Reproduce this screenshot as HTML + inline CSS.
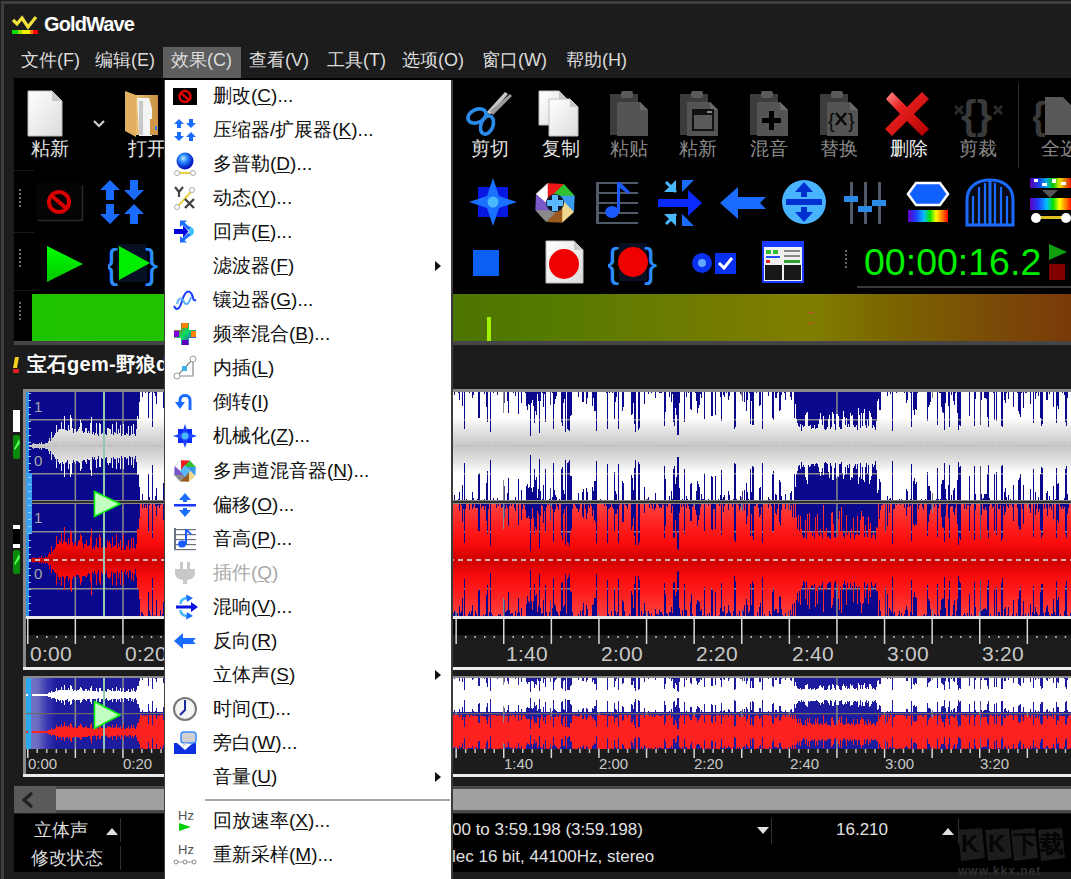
<!DOCTYPE html><html><head><meta charset="utf-8"><style>
html,body{margin:0;padding:0;}
body{width:1071px;height:879px;position:relative;overflow:hidden;background:#1c1c1c;font-family:"Liberation Sans",sans-serif;}
body>div,body>svg{position:absolute;}
.t{white-space:nowrap;line-height:1.2;}
.c{display:inline-block;width:1em;text-align:center;}
u{text-decoration:underline;text-underline-offset:2px;text-decoration-thickness:1px;}
</style></head><body>
<div style="left:0px;top:0px;width:1071px;height:879px;background:#1c1c1c;"></div>
<div style="left:1px;top:1px;width:1071px;height:3px;background:#3e3e3e;"></div>
<div style="left:1px;top:1px;width:3px;height:879px;background:#3e3e3e;"></div>
<svg style="left:11px;top:14px" width="28" height="22" viewBox="0 0 28 22">
<polyline points="2,6 6,10 11,4 17,13 25,3" fill="none" stroke="#f2e23a" stroke-width="3.2" stroke-linejoin="miter"/>
<rect x="1" y="16" width="6" height="4" fill="#00e000"/><rect x="7" y="16" width="4" height="4" fill="#9ae000"/>
<rect x="11" y="16" width="8" height="4" fill="#f0f000"/><rect x="19" y="16" width="3" height="4" fill="#ff8000"/>
<rect x="22" y="16" width="5" height="4" fill="#ff0000"/></svg>
<div class="t " style="left:44px;top:12px;font-size:20px;color:#ffffff;font-weight:bold;letter-spacing:-0.9px;">GoldWave</div>
<div style="left:163px;top:47px;width:78px;height:32px;background:#5e5e5e;"></div>
<div class="t " style="left:21px;top:50px;font-size:18px;color:#dcdcdc;"><span class="c">文</span><span class="c">件</span>(F)</div>
<div class="t " style="left:95px;top:50px;font-size:18px;color:#dcdcdc;"><span class="c">编</span><span class="c">辑</span>(E)</div>
<div class="t " style="left:171px;top:50px;font-size:18px;color:#dcdcdc;"><span class="c">效</span><span class="c">果</span>(C)</div>
<div class="t " style="left:249px;top:50px;font-size:18px;color:#dcdcdc;"><span class="c">查</span><span class="c">看</span>(V)</div>
<div class="t " style="left:327px;top:50px;font-size:18px;color:#dcdcdc;"><span class="c">工</span><span class="c">具</span>(T)</div>
<div class="t " style="left:402px;top:50px;font-size:18px;color:#dcdcdc;"><span class="c">选</span><span class="c">项</span>(O)</div>
<div class="t " style="left:482px;top:50px;font-size:18px;color:#dcdcdc;"><span class="c">窗</span><span class="c">口</span>(W)</div>
<div class="t " style="left:566px;top:50px;font-size:18px;color:#dcdcdc;"><span class="c">帮</span><span class="c">助</span>(H)</div>
<div style="left:14px;top:78px;width:1057px;height:267px;background:#000000;"></div>
<div style="left:32px;top:294px;width:1039px;height:47px;background:linear-gradient(90deg,#1fc400 0%,#22c000 25%,#4c7400 40.5%,#527a00 48%,#7a7c00 70%,#807e00 75%,#7b6400 83%,#7a4a08 93%,#7a3a08 100%)"></div>
<div style="left:487px;top:317px;width:4px;height:24px;background:#a0f000;"></div>
<div style="left:14px;top:341px;width:1057px;height:4px;background:#454545;"></div>
<div style="left:808px;top:312px;width:6px;height:1px;background:#c05030;"></div>
<div style="left:808px;top:323px;width:6px;height:1px;background:#c05030;"></div>
<div class="t " style="left:27px;top:352px;font-size:20px;color:#ffffff;font-weight:bold;letter-spacing:0.3px;"><span class="c">宝</span><span class="c">石</span>gem-<span class="c">野</span><span class="c">狼</span>d</div>
<svg style="left:12px;top:355px" width="8" height="20"><polygon points="3,2 7,2 5,13 1,13" fill="#f0d020"/><rect x="1" y="14" width="6" height="4" fill="#e02020"/></svg>
<svg style="left:19px;top:189px" width="3" height="20" viewBox="0 0 3 20"><rect x="0" y="0" width="2" height="2" fill="#6a6a6a"/><rect x="0" y="4" width="2" height="2" fill="#6a6a6a"/><rect x="0" y="8" width="2" height="2" fill="#6a6a6a"/><rect x="0" y="12" width="2" height="2" fill="#6a6a6a"/><rect x="0" y="16" width="2" height="2" fill="#6a6a6a"/></svg>
<svg style="left:19px;top:249px" width="3" height="20" viewBox="0 0 3 20"><rect x="0" y="0" width="2" height="2" fill="#6a6a6a"/><rect x="0" y="4" width="2" height="2" fill="#6a6a6a"/><rect x="0" y="8" width="2" height="2" fill="#6a6a6a"/><rect x="0" y="12" width="2" height="2" fill="#6a6a6a"/><rect x="0" y="16" width="2" height="2" fill="#6a6a6a"/></svg>
<svg style="left:19px;top:302px" width="3" height="20" viewBox="0 0 3 20"><rect x="0" y="0" width="2" height="2" fill="#6a6a6a"/><rect x="0" y="4" width="2" height="2" fill="#6a6a6a"/><rect x="0" y="8" width="2" height="2" fill="#6a6a6a"/><rect x="0" y="12" width="2" height="2" fill="#6a6a6a"/><rect x="0" y="16" width="2" height="2" fill="#6a6a6a"/></svg>
<div style="left:14px;top:170px;width:20px;height:1px;background:#1a1a1a;"></div>
<div style="left:14px;top:232px;width:20px;height:1px;background:#1a1a1a;"></div>
<div style="left:14px;top:290px;width:20px;height:1px;background:#1a1a1a;"></div>
<svg style="left:26px;top:90px" width="40" height="48" viewBox="0 0 40 48"><defs><linearGradient id="pg" x1="0" y1="0" x2="1" y2="1"><stop offset="0" stop-color="#ffffff"/><stop offset="1" stop-color="#dcdcdc"/></linearGradient></defs><path d="M2 1H26L36 11V46H2Z" fill="url(#pg)" stroke="#bdbdbd" stroke-width="1"/><path d="M26 1V11H36Z" fill="#c8c8c8"/></svg>
<div class="t " style="left:31px;top:138px;font-size:19px;color:#e4e4e4;"><span class="c">粘</span><span class="c">新</span></div>
<svg style="left:92px;top:118px" width="14" height="12" viewBox="0 0 14 12"><polyline points="2,3 7,8 12,3" fill="none" stroke="#d0d0d0" stroke-width="2.2"/></svg>
<svg style="left:122px;top:89px" width="44" height="50" viewBox="0 0 44 50"><defs><linearGradient id="fd" x1="0" y1="0" x2="1" y2="0"><stop offset="0" stop-color="#e8c070"/><stop offset="1" stop-color="#c89040"/></linearGradient></defs>
<path d="M3 2L14 6V48L3 42Z" fill="#e0b060"/><path d="M14 6H36V46H14Z" fill="url(#fd)"/>
<path d="M15 9H27L30 20V47H17Z" fill="#f4f4f4"/><path d="M17 12H21V46H17Z" fill="#c8c8c8"/>
<path d="M28 30H36V46H28Z" fill="#d09848"/><rect x="33" y="37" width="2" height="4" fill="#3a7ae0"/></svg>
<div class="t " style="left:128px;top:138px;font-size:19px;color:#e4e4e4;"><span class="c">打</span><span class="c">开</span></div>
<svg style="left:464px;top:89px" width="50" height="50" viewBox="0 0 50 50"><path d="M41 3L44 5L27 25L22 24Z" fill="#c8c8c8"/><path d="M48 7L46 5L26 22L29 26Z" fill="#9a9a9a"/>
<ellipse cx="13" cy="27" rx="9.5" ry="6.5" transform="rotate(-25 13 27)" fill="none" stroke="#2a8ce8" stroke-width="3.6"/>
<ellipse cx="23" cy="36" rx="6" ry="9.5" transform="rotate(20 23 36)" fill="none" stroke="#2a8ce8" stroke-width="3.6"/></svg>
<div class="t " style="left:471px;top:138px;font-size:19px;color:#e4e4e4;"><span class="c">剪</span><span class="c">切</span></div>
<svg style="left:536px;top:89px" width="46" height="50" viewBox="0 0 46 50"><defs><linearGradient id="pg" x1="0" y1="0" x2="1" y2="1"><stop offset="0" stop-color="#ffffff"/><stop offset="1" stop-color="#dcdcdc"/></linearGradient></defs><path d="M3 2H23L31 10V36H3Z" fill="url(#pg)" stroke="#bdbdbd" stroke-width="1"/><path d="M23 2V10H31Z" fill="#c8c8c8"/><path d="M13 10H34L42 18V47H13Z" fill="url(#pg)" stroke="#bdbdbd" stroke-width="1"/><path d="M34 10V18H42Z" fill="#c8c8c8"/></svg>
<div class="t " style="left:542px;top:138px;font-size:19px;color:#e4e4e4;"><span class="c">复</span><span class="c">制</span></div>
<svg style="left:608px;top:89px" width="42" height="50" viewBox="0 0 42 50"><path d="M2 5H30V46H2Z" fill="#3c3c3c"/><path d="M9 13H32L40 21V47H9Z" fill="#545454"/><path d="M32 13V21H40Z" fill="#6a6a6a"/><rect x="13" y="2" width="12" height="7" rx="2" fill="#5a5a5a"/></svg>
<div class="t " style="left:610px;top:138px;font-size:19px;color:#8a8a8a;"><span class="c">粘</span><span class="c">贴</span></div>
<svg style="left:678px;top:89px" width="42" height="50" viewBox="0 0 42 50"><path d="M2 5H30V46H2Z" fill="#3c3c3c"/><path d="M9 13H32L40 21V47H9Z" fill="#545454"/><path d="M32 13V21H40Z" fill="#6a6a6a"/><rect x="13" y="2" width="12" height="7" rx="2" fill="#5a5a5a"/><rect x="14" y="20" width="22" height="22" fill="#111"/><rect x="16" y="26" width="18" height="14" fill="#5a5a5a"/><rect x="29" y="22" width="5" height="2" fill="#888"/></svg>
<div class="t " style="left:679px;top:138px;font-size:19px;color:#8a8a8a;"><span class="c">粘</span><span class="c">新</span></div>
<svg style="left:748px;top:89px" width="42" height="50" viewBox="0 0 42 50"><path d="M2 5H30V46H2Z" fill="#3c3c3c"/><path d="M9 13H32L40 21V47H9Z" fill="#545454"/><path d="M32 13V21H40Z" fill="#6a6a6a"/><rect x="13" y="2" width="12" height="7" rx="2" fill="#5a5a5a"/><rect x="21" y="22" width="5" height="19" fill="#000"/><rect x="14" y="29" width="19" height="5" fill="#000"/></svg>
<div class="t " style="left:750px;top:138px;font-size:19px;color:#8a8a8a;"><span class="c">混</span><span class="c">音</span></div>
<svg style="left:818px;top:89px" width="42" height="50" viewBox="0 0 42 50"><path d="M2 5H30V46H2Z" fill="#3c3c3c"/><path d="M9 13H32L40 21V47H9Z" fill="#545454"/><path d="M32 13V21H40Z" fill="#6a6a6a"/><rect x="13" y="2" width="12" height="7" rx="2" fill="#5a5a5a"/><text x="10" y="39" font-size="20" font-family="Liberation Sans" fill="#0a0a0a">{</text><text x="30" y="39" font-size="20" font-family="Liberation Sans" fill="#0a0a0a">}</text><path d="M18 24L28 36M28 24L18 36" stroke="#0a0a0a" stroke-width="2.6"/></svg>
<div class="t " style="left:820px;top:138px;font-size:19px;color:#8a8a8a;"><span class="c">替</span><span class="c">换</span></div>
<svg style="left:882px;top:89px" width="52" height="50" viewBox="0 0 52 50"><defs><linearGradient id="rx" x1="0" y1="0" x2="1" y2="1"><stop offset="0" stop-color="#ff9090"/><stop offset="0.35" stop-color="#e82020"/><stop offset="1" stop-color="#b00000"/></linearGradient></defs>
<path d="M4 10L10 3L25 18L40 3L47 10L32 25L47 40L40 47L25 32L10 47L3 40L18 25Z" fill="url(#rx)"/></svg>
<div class="t " style="left:890px;top:138px;font-size:19px;color:#f0f0f0;"><span class="c">删</span><span class="c">除</span></div>
<svg style="left:954px;top:89px" width="52" height="50" viewBox="0 0 52 50"><text x="7" y="40" font-size="40" font-family="Liberation Sans" fill="#3a3a3a" font-weight="bold">{}</text>
<path d="M1 17L9 25M9 17L1 25M40 17L48 25M48 17L40 25" stroke="#2a2a2a" stroke-width="3"/></svg>
<div class="t " style="left:959px;top:138px;font-size:19px;color:#8a8a8a;"><span class="c">剪</span><span class="c">裁</span></div>
<div style="left:1018px;top:83px;width:1px;height:85px;background:#2c2c2c;"></div>
<svg style="left:1033px;top:89px" width="40" height="50" viewBox="0 0 40 50"><text x="-2" y="40" font-size="38" font-family="Liberation Sans" fill="#3a3a3a" font-weight="bold">{</text>
<path d="M12 8H30L38 16V46H12Z" fill="#585858"/></svg>
<div class="t " style="left:1041px;top:138px;font-size:19px;color:#8a8a8a;"><span class="c">全</span><span class="c">选</span></div>
<svg style="left:36px;top:183px" width="48" height="40" viewBox="0 0 48 40"><rect x="0" y="0" width="46" height="37" fill="#050505"/><path d="M46.5 2V37.5H2" fill="none" stroke="#2a2a2a" stroke-width="1.5"/><circle cx="23" cy="19" r="10" fill="none" stroke="#d80000" stroke-width="4"/><path d="M16 13L30 25" stroke="#d80000" stroke-width="4"/></svg>
<svg style="left:98px;top:178px" width="48" height="48" viewBox="0 0 48 48"><g fill="#1a6cff">
<path d="M12 2L22 12H16V22H8V12H2Z"/><path d="M12 46L22 36H16V26H8V36H2Z"/>
<path d="M36 22L46 12H40V2H32V12H26Z"/><path d="M36 26L46 36H40V46H32V36H26Z"/></g></svg>
<svg style="left:469px;top:178px" width="48" height="48" viewBox="0 0 48 48"><rect x="9" y="9" width="30" height="30" fill="#0818e0"/><path d="M24 0L30 18L48 24L30 30L24 48L18 30L0 24L18 18Z" fill="#1a70ff"/><circle cx="24" cy="24" r="5.5" fill="#48b8ff"/></svg>
<svg style="left:532px;top:180px" width="46" height="46" viewBox="0 0 46 46"><path d="M17.7 28.1L4.0 14.1L15.8 3.3Z" fill="#ffffff" stroke="#d0d0d0" stroke-width="0.8"/><path d="M15.7 22.8L15.8 3.3L31.9 4.0Z" fill="#ee1a1a"/><path d="M17.9 17.7L31.9 4.0L42.7 15.8Z" fill="#30c030"/><path d="M23.2 15.7L42.7 15.8L42.0 31.9Z" fill="#3a9af0"/><path d="M28.3 17.9L42.0 31.9L30.2 42.7Z" fill="#f0d890"/><path d="M30.3 23.2L30.2 42.7L14.1 42.0Z" fill="#9a5a20"/><path d="M28.1 28.3L14.1 42.0L3.3 30.2Z" fill="#8a8a8a"/><path d="M22.8 30.3L3.3 30.2L4.0 14.1Z" fill="#7a5ac8"/><circle cx="23" cy="23" r="9" fill="#101830"/><path d="M20 15H26V20H31V26H26V31H20V26H15V20H20Z" fill="#5ab8ff"/></svg>
<svg style="left:594px;top:180px" width="46" height="46" viewBox="0 0 46 46"><g fill="#505a68"><rect x="2" y="2" width="3" height="42"/><rect x="2" y="2" width="42" height="2"/><rect x="2" y="12" width="42" height="2"/><rect x="2" y="22" width="42" height="2"/><rect x="2" y="32" width="42" height="2"/><rect x="2" y="42" width="42" height="2"/></g>
<ellipse cx="18" cy="32" rx="7" ry="6" fill="#1a5aff"/><rect x="23" y="2" width="3" height="30" fill="#1a5aff"/><path d="M26 2L36 12L34 14L26 8Z" fill="#1a5aff"/></svg>
<svg style="left:656px;top:178px" width="50" height="50" viewBox="0 0 50 50"><path d="M2 21H32V12L46 25L32 38V29H2Z" fill="#0a2aff"/>
<path d="M20 2L20 14L8 14Z" fill="#48b8ff"/><path d="M10 4L20 14" stroke="#48b8ff" stroke-width="3"/>
<path d="M20 48L20 36L8 36Z" fill="#48b8ff"/><path d="M10 46L20 36" stroke="#48b8ff" stroke-width="3"/>
<path d="M26 2L38 2L26 14Z" fill="#1a6cff"/><path d="M26 48L38 48L26 36Z" fill="#1a6cff"/></svg>
<svg style="left:718px;top:185px" width="50" height="36" viewBox="0 0 50 36"><path d="M2 18L20 2V12H48L42 18L48 24H20V34Z" fill="#1a6cff"/></svg>
<svg style="left:780px;top:178px" width="48" height="48" viewBox="0 0 48 48"><circle cx="24" cy="24" r="22" fill="#48b4ff"/><rect x="6" y="21" width="36" height="6" fill="#0030d0"/>
<path d="M24 4L33 14H27V19H21V14H15Z" fill="#0030d0"/><path d="M24 44L33 34H27V29H21V34H15Z" fill="#0030d0"/></svg>
<svg style="left:842px;top:180px" width="48" height="46" viewBox="0 0 48 46"><g fill="#505a68"><rect x="8" y="2" width="3" height="42"/><rect x="22" y="2" width="3" height="42"/><rect x="36" y="2" width="3" height="42"/></g>
<g fill="#2a8ae8"><rect x="2" y="16" width="14" height="6"/><rect x="16" y="26" width="14" height="6"/><rect x="30" y="20" width="14" height="6"/></g></svg>
<svg style="left:904px;top:178px" width="48" height="48" viewBox="0 0 48 48"><defs><linearGradient id="rb" x1="0" y1="0" x2="1" y2="0"><stop offset="0" stop-color="#6000c0"/><stop offset="0.2" stop-color="#2040ff"/><stop offset="0.4" stop-color="#00c0ff"/><stop offset="0.55" stop-color="#00e000"/><stop offset="0.7" stop-color="#ffff00"/><stop offset="0.85" stop-color="#ff8000"/><stop offset="1" stop-color="#ff0000"/></linearGradient></defs>
<path d="M4 16L12 5H36L44 16L36 27H12Z" fill="#1060ff" stroke="#fff" stroke-width="2.5"/><rect x="4" y="32" width="40" height="12" fill="url(#rb)"/></svg>
<svg style="left:964px;top:178px" width="52" height="50" viewBox="0 0 52 50"><path d="M3 47V22C3 8 14 2 26 2C38 2 49 8 49 22V47Z" fill="#0a0a14" stroke="#1a6cff" stroke-width="3"/>
<g stroke="#1a6cff" stroke-width="2.2"><path d="M9 46V18M15 46V9M21 46V5M31 46V5M37 46V9M43 46V18"/></g><path d="M26 2V47" stroke="#1a6cff" stroke-width="3"/></svg>
<svg style="left:1028px;top:176px" width="43" height="52" viewBox="0 0 43 52"><rect x="2" y="2" width="42" height="10" fill="url(#rb)" opacity="0.9"/><path d="M6 3h4v3h-4zM14 7h5v3h-5zM24 3h4v4h-4zM33 6h5v3h-5z" fill="#fff"/>
<path d="M14 14L30 14L22 22Z" fill="#555"/><rect x="2" y="22" width="42" height="12" fill="url(#rb)"/>
<rect x="8" y="40" width="30" height="3" fill="#e0c020"/><circle cx="8" cy="42" r="5" fill="#fff"/><circle cx="38" cy="42" r="5" fill="#fff"/></svg>
<svg style="left:44px;top:244px" width="42" height="40" viewBox="0 0 42 40"><defs><linearGradient id="gpl" x1="0" y1="0" x2="0" y2="1"><stop offset="0" stop-color="#00ff00"/><stop offset="1" stop-color="#00c800"/></linearGradient></defs><path d="M3 2L39 20L3 38Z" fill="url(#gpl)"/></svg>
<svg style="left:108px;top:240px" width="50" height="46" viewBox="0 0 50 46"><rect x="9" y="4" width="30" height="38" fill="#061022"/><path d="M11 6L42 23L11 40Z" fill="#00ee00"/>
<text x="-3" y="38" font-size="40" font-family="Liberation Sans" fill="#2a8cff">{</text><text x="37" y="38" font-size="40" font-family="Liberation Sans" fill="#2a8cff">}</text></svg>
<svg style="left:473px;top:250px" width="26" height="26" viewBox="0 0 26 26"><rect x="0" y="0" width="26" height="26" fill="#0a60f0"/></svg>
<svg style="left:544px;top:239px" width="42" height="46" viewBox="0 0 42 46"><defs><linearGradient id="pg" x1="0" y1="0" x2="1" y2="1"><stop offset="0" stop-color="#ffffff"/><stop offset="1" stop-color="#dcdcdc"/></linearGradient></defs><path d="M2 2H30L39 11V44H2Z" fill="url(#pg)" stroke="#bdbdbd" stroke-width="1"/><path d="M30 2V11H39Z" fill="#c8c8c8"/><circle cx="20" cy="25" r="15" fill="#f00000"/></svg>
<svg style="left:608px;top:239px" width="50" height="46" viewBox="0 0 50 46"><rect x="11" y="4" width="28" height="38" fill="#061022"/><circle cx="25" cy="23" r="15" fill="#f00000"/>
<text x="-2" y="38" font-size="40" font-family="Liberation Sans" fill="#2a8cff">{</text><text x="36" y="38" font-size="40" font-family="Liberation Sans" fill="#2a8cff">}</text></svg>
<svg style="left:690px;top:252px" width="48" height="24" viewBox="0 0 48 24"><circle cx="12" cy="11" r="10" fill="#0a30f0"/><circle cx="12" cy="11" r="4" fill="#60a8ff"/><rect x="25" y="1" width="21" height="21" fill="#0a30f0"/><polyline points="29,11 34,16 42,6" fill="none" stroke="#fff" stroke-width="3"/></svg>
<svg style="left:762px;top:241px" width="44" height="44" viewBox="0 0 44 44"><rect x="1" y="1" width="40" height="40" fill="#f0f0f0" stroke="#1a3aff" stroke-width="2"/><rect x="1" y="1" width="40" height="5" fill="#1a3aff"/>
<rect x="4" y="9" width="5" height="4" fill="#30c030"/><rect x="11" y="9" width="5" height="4" fill="#30c030"/><rect x="4" y="15" width="14" height="2" fill="#2050ff"/><rect x="4" y="19" width="4" height="3" fill="#e02020"/>
<rect x="22" y="9" width="16" height="2" fill="#888"/><rect x="22" y="14" width="16" height="2" fill="#888"/><rect x="22" y="19" width="16" height="3" fill="#30a030"/>
<rect x="3" y="24" width="17" height="15" fill="#181818"/><rect x="22" y="24" width="17" height="15" fill="#181818"/></svg>
<svg style="left:845px;top:250px" width="3" height="20" viewBox="0 0 3 20"><rect x="0" y="0" width="2" height="2" fill="#6a6a6a"/><rect x="0" y="4" width="2" height="2" fill="#6a6a6a"/><rect x="0" y="8" width="2" height="2" fill="#6a6a6a"/><rect x="0" y="12" width="2" height="2" fill="#6a6a6a"/><rect x="0" y="16" width="2" height="2" fill="#6a6a6a"/></svg>
<div style="left:857px;top:286px;width:214px;height:2px;background:#3a3a3a;"></div>
<div class="t " style="left:864px;top:240px;font-size:37.5px;color:#00ee00;">00:00:16.2</div>
<svg style="left:1048px;top:243px" width="20" height="40" viewBox="0 0 20 40"><path d="M1 1L19 9L1 17Z" fill="#10a010"/><rect x="1" y="21" width="16" height="16" fill="#800000"/></svg>
<div style="left:23px;top:389px;width:1048px;height:3px;background:#8a8a8a;"></div>
<div style="left:23px;top:389px;width:3px;height:281px;background:#8a8a8a;"></div>
<div style="left:26px;top:392px;width:1045px;height:108px;background:#0a088c;"></div>
<div style="left:26px;top:504px;width:1045px;height:112px;background:#0a088c;"></div>
<div style="left:26px;top:500px;width:1045px;height:4px;background:#8a8a8a;"></div>
<div style="left:26px;top:501px;width:1045px;height:2px;background:#2e2e2e;"></div>
<div style="left:26px;top:616px;width:1045px;height:3px;background:#e8e8e8;"></div>
<svg style="left:26px;top:392px" width="1045" height="224">
<defs>
<linearGradient id="gw" gradientUnits="userSpaceOnUse" x1="0" y1="0" x2="0" y2="108">
<stop offset="0" stop-color="#ffffff"/><stop offset="0.24" stop-color="#ffffff"/><stop offset="0.36" stop-color="#e2e2e2"/><stop offset="0.5" stop-color="#c6c6c6"/><stop offset="0.64" stop-color="#e2e2e2"/><stop offset="0.75" stop-color="#ffffff"/><stop offset="1" stop-color="#ffffff"/></linearGradient>
<linearGradient id="gr" gradientUnits="userSpaceOnUse" x1="0" y1="112" x2="0" y2="224">
<stop offset="0" stop-color="#ff4040"/><stop offset="0.18" stop-color="#ff2222"/><stop offset="0.36" stop-color="#fa0a0a"/><stop offset="0.5" stop-color="#cc0000"/><stop offset="0.64" stop-color="#fa0a0a"/><stop offset="0.82" stop-color="#ff2222"/><stop offset="1" stop-color="#ff4040"/></linearGradient>
</defs>
<rect x="48.6" y="0" width="1.5" height="108" fill="#8c8c8c"/><rect x="48.6" y="112" width="1.5" height="112" fill="#8c8c8c"/><rect x="96.2" y="0" width="1.5" height="108" fill="#8c8c8c"/><rect x="96.2" y="112" width="1.5" height="112" fill="#8c8c8c"/><rect x="143.8" y="0" width="1.5" height="108" fill="#8c8c8c"/><rect x="143.8" y="112" width="1.5" height="112" fill="#8c8c8c"/><rect x="191.4" y="0" width="1.5" height="108" fill="#8c8c8c"/><rect x="191.4" y="112" width="1.5" height="112" fill="#8c8c8c"/><rect x="239.0" y="0" width="1.5" height="108" fill="#8c8c8c"/><rect x="239.0" y="112" width="1.5" height="112" fill="#8c8c8c"/><rect x="286.6" y="0" width="1.5" height="108" fill="#8c8c8c"/><rect x="286.6" y="112" width="1.5" height="112" fill="#8c8c8c"/><rect x="334.2" y="0" width="1.5" height="108" fill="#8c8c8c"/><rect x="334.2" y="112" width="1.5" height="112" fill="#8c8c8c"/><rect x="381.8" y="0" width="1.5" height="108" fill="#8c8c8c"/><rect x="381.8" y="112" width="1.5" height="112" fill="#8c8c8c"/><rect x="429.4" y="0" width="1.5" height="108" fill="#8c8c8c"/><rect x="429.4" y="112" width="1.5" height="112" fill="#8c8c8c"/><rect x="477.0" y="0" width="1.5" height="108" fill="#8c8c8c"/><rect x="477.0" y="112" width="1.5" height="112" fill="#8c8c8c"/><rect x="524.6" y="0" width="1.5" height="108" fill="#8c8c8c"/><rect x="524.6" y="112" width="1.5" height="112" fill="#8c8c8c"/><rect x="572.2" y="0" width="1.5" height="108" fill="#8c8c8c"/><rect x="572.2" y="112" width="1.5" height="112" fill="#8c8c8c"/><rect x="619.8" y="0" width="1.5" height="108" fill="#8c8c8c"/><rect x="619.8" y="112" width="1.5" height="112" fill="#8c8c8c"/><rect x="667.4" y="0" width="1.5" height="108" fill="#8c8c8c"/><rect x="667.4" y="112" width="1.5" height="112" fill="#8c8c8c"/><rect x="715.0" y="0" width="1.5" height="108" fill="#8c8c8c"/><rect x="715.0" y="112" width="1.5" height="112" fill="#8c8c8c"/><rect x="762.6" y="0" width="1.5" height="108" fill="#8c8c8c"/><rect x="762.6" y="112" width="1.5" height="112" fill="#8c8c8c"/><rect x="810.2" y="0" width="1.5" height="108" fill="#8c8c8c"/><rect x="810.2" y="112" width="1.5" height="112" fill="#8c8c8c"/><rect x="857.8" y="0" width="1.5" height="108" fill="#8c8c8c"/><rect x="857.8" y="112" width="1.5" height="112" fill="#8c8c8c"/><rect x="905.4" y="0" width="1.5" height="108" fill="#8c8c8c"/><rect x="905.4" y="112" width="1.5" height="112" fill="#8c8c8c"/><rect x="953.0" y="0" width="1.5" height="108" fill="#8c8c8c"/><rect x="953.0" y="112" width="1.5" height="112" fill="#8c8c8c"/><rect x="1000.6" y="0" width="1.5" height="108" fill="#8c8c8c"/><rect x="1000.6" y="112" width="1.5" height="112" fill="#8c8c8c"/><rect x="0" y="27" width="1045" height="1.5" fill="#8c8c8c"/><rect x="0" y="81" width="1045" height="1.5" fill="#8c8c8c"/><rect x="0" y="139" width="1045" height="1.5" fill="#8c8c8c"/><rect x="0" y="196" width="1045" height="1.5" fill="#8c8c8c"/>
<path fill="url(#gw)" d="M0 52h1v4h-1zM1 52h1v4h-1zM2 53h1v2h-1zM3 53h1v2h-1zM4 53h1v2h-1zM5 53h1v2h-1zM6 52h1v4h-1zM7 51h1v6h-1zM8 52h1v4h-1zM9 52h1v4h-1zM10 52h1v4h-1zM11 52h1v4h-1zM12 52h1v4h-1zM13 51h1v6h-1zM14 52h1v4h-1zM15 50h1v8h-1zM16 52h1v4h-1zM17 52h1v4h-1zM18 52h1v4h-1zM19 51h1v6h-1zM20 51h1v6h-1zM21 51h1v6h-1zM22 49h1v10h-1zM23 46h1v16h-1zM24 49h1v10h-1zM25 40h1v28h-1zM26 46h1v16h-1zM27 45h1v18h-1zM28 43h1v22h-1zM29 41h1v26h-1zM30 33h1v43h-1zM31 40h1v27h-1zM32 38h1v32h-1zM33 37h1v35h-1zM34 37h1v34h-1zM35 30h1v49h-1zM36 37h1v33h-1zM37 37h1v35h-1zM38 24h1v61h-1zM39 38h1v33h-1zM40 38h1v32h-1zM41 39h1v29h-1zM42 33h1v44h-1zM43 38h1v34h-1zM44 23h1v62h-1zM45 26h1v56h-1zM46 36h1v35h-1zM47 41h1v27h-1zM48 37h1v33h-1zM49 37h1v35h-1zM50 40h1v29h-1zM51 39h1v30h-1zM52 37h1v33h-1zM53 35h1v36h-1zM54 28h1v51h-1zM55 31h1v46h-1zM56 39h1v30h-1zM57 41h1v27h-1zM58 40h1v28h-1zM59 36h1v34h-1zM60 36h1v36h-1zM61 41h1v26h-1zM62 39h1v29h-1zM63 41h1v27h-1zM64 31h1v47h-1zM65 25h1v59h-1zM66 42h1v23h-1zM67 40h1v27h-1zM68 43h1v22h-1zM69 41h1v27h-1zM70 31h1v45h-1zM71 42h1v25h-1zM72 44h1v20h-1zM73 31h1v44h-1zM74 32h1v43h-1zM75 42h1v24h-1zM76 41h1v26h-1zM77 40h1v28h-1zM78 40h1v28h-1zM79 42h1v24h-1zM80 43h1v22h-1zM81 36h1v35h-1zM82 36h1v37h-1zM83 37h1v34h-1zM84 37h1v34h-1zM85 42h1v24h-1zM86 32h1v44h-1zM87 43h1v22h-1zM88 40h1v27h-1zM89 41h1v26h-1zM90 30h1v47h-1zM91 42h1v24h-1zM92 37h1v34h-1zM93 41h1v25h-1zM94 33h1v44h-1zM95 44h1v20h-1zM96 42h1v24h-1zM97 32h1v45h-1zM98 43h1v22h-1zM99 43h1v22h-1zM100 41h1v26h-1zM101 42h1v24h-1zM102 34h1v39h-1zM103 44h1v20h-1zM104 43h1v22h-1zM105 34h1v39h-1zM106 42h1v23h-1zM107 32h1v44h-1zM108 42h1v25h-1zM109 44h1v20h-1zM110 37h1v33h-1zM111 24h1v59h-1zM112 27h1v55h-1zM113 10h1v85h-1zM114 0h1v108h-1zM115 0h1v108h-1zM116 5h1v97h-1zM117 0h1v108h-1zM118 0h1v108h-1zM119 1h1v107h-1zM120 0h1v108h-1zM121 0h1v108h-1zM122 26h1v56h-1zM123 1h1v104h-1zM124 0h1v108h-1zM125 0h1v108h-1zM126 35h1v38h-1zM127 0h1v108h-1zM128 1h1v107h-1zM129 4h1v100h-1zM130 12h1v84h-1zM131 0h1v108h-1zM132 0h1v108h-1zM133 0h1v108h-1zM134 0h1v108h-1zM135 0h1v108h-1zM136 0h1v108h-1zM137 16h1v75h-1zM138 1h1v107h-1zM139 0h1v107h-1zM140 0h1v108h-1zM141 1h1v107h-1zM142 0h1v108h-1zM143 0h1v108h-1zM144 0h1v108h-1zM145 1h1v107h-1zM146 3h1v102h-1zM147 0h1v107h-1zM148 32h1v44h-1zM149 33h1v42h-1zM150 11h1v85h-1zM151 11h1v88h-1zM152 22h1v65h-1zM153 19h1v69h-1zM154 32h1v43h-1zM155 7h1v95h-1zM156 7h1v93h-1zM157 3h1v101h-1zM158 1h1v107h-1zM159 3h1v103h-1zM160 0h1v108h-1zM161 6h1v97h-1zM162 0h1v108h-1zM163 0h1v108h-1zM164 0h1v108h-1zM165 0h1v108h-1zM166 0h1v108h-1zM167 0h1v108h-1zM168 12h1v84h-1zM169 25h1v57h-1zM170 10h1v87h-1zM171 0h1v108h-1zM172 0h1v108h-1zM173 24h1v59h-1zM174 0h1v108h-1zM175 5h1v95h-1zM176 3h1v103h-1zM177 0h1v108h-1zM178 0h1v108h-1zM179 12h1v83h-1zM180 22h1v64h-1zM181 0h1v107h-1zM182 0h1v107h-1zM183 1h1v107h-1zM184 0h1v108h-1zM185 6h1v95h-1zM186 2h1v103h-1zM187 7h1v94h-1zM188 8h1v94h-1zM189 4h1v101h-1zM190 36h1v35h-1zM191 15h1v77h-1zM192 16h1v77h-1zM193 7h1v95h-1zM194 7h1v93h-1zM195 3h1v103h-1zM196 16h1v74h-1zM197 0h1v108h-1zM198 3h1v102h-1zM199 3h1v103h-1zM200 12h1v84h-1zM201 18h1v70h-1zM202 18h1v73h-1zM203 0h1v108h-1zM204 1h1v107h-1zM205 0h1v108h-1zM206 0h1v108h-1zM207 11h1v85h-1zM208 0h1v107h-1zM209 1h1v107h-1zM210 25h1v58h-1zM211 5h1v97h-1zM212 0h1v108h-1zM213 0h1v108h-1zM214 0h1v108h-1zM215 2h1v106h-1zM216 27h1v54h-1zM217 28h1v51h-1zM218 30h1v48h-1zM219 0h1v108h-1zM220 0h1v108h-1zM221 0h1v108h-1zM222 0h1v108h-1zM223 0h1v108h-1zM224 0h1v108h-1zM225 0h1v108h-1zM226 37h1v33h-1zM227 0h1v108h-1zM228 0h1v108h-1zM229 0h1v108h-1zM230 0h1v108h-1zM231 0h1v108h-1zM232 0h1v108h-1zM233 24h1v60h-1zM234 16h1v77h-1zM235 0h1v108h-1zM236 38h1v33h-1zM237 38h1v32h-1zM238 0h1v108h-1zM239 0h1v108h-1zM240 0h1v108h-1zM241 3h1v102h-1zM242 34h1v40h-1zM243 3h1v104h-1zM244 17h1v74h-1zM245 25h1v58h-1zM246 28h1v51h-1zM247 9h1v91h-1zM248 1h1v107h-1zM249 7h1v95h-1zM250 11h1v87h-1zM251 31h1v45h-1zM252 30h1v49h-1zM253 0h1v108h-1zM254 0h1v108h-1zM255 30h1v48h-1zM256 0h1v108h-1zM257 0h1v108h-1zM258 0h1v108h-1zM259 0h1v108h-1zM260 9h1v89h-1zM261 30h1v49h-1zM262 0h1v108h-1zM263 0h1v108h-1zM264 0h1v108h-1zM265 0h1v108h-1zM266 0h1v108h-1zM267 0h1v108h-1zM268 0h1v108h-1zM269 0h1v108h-1zM270 0h1v108h-1zM271 0h1v108h-1zM272 9h1v89h-1zM273 0h1v108h-1zM274 4h1v99h-1zM275 0h1v108h-1zM276 0h1v108h-1zM277 0h1v108h-1zM278 1h1v107h-1zM279 0h1v108h-1zM280 0h1v108h-1zM281 0h1v108h-1zM282 0h1v108h-1zM283 0h1v108h-1zM284 15h1v79h-1zM285 16h1v77h-1zM286 1h1v107h-1zM287 5h1v96h-1zM288 8h1v93h-1zM289 3h1v102h-1zM290 0h1v108h-1zM291 0h1v108h-1zM292 0h1v108h-1zM293 0h1v108h-1zM294 0h1v108h-1zM295 0h1v108h-1zM296 11h1v85h-1zM297 0h1v108h-1zM298 0h1v107h-1zM299 0h1v108h-1zM300 3h1v103h-1zM301 34h1v40h-1zM302 0h1v108h-1zM303 0h1v108h-1zM304 0h1v108h-1zM305 0h1v108h-1zM306 0h1v108h-1zM307 0h1v108h-1zM308 0h1v108h-1zM309 0h1v108h-1zM310 0h1v108h-1zM311 3h1v103h-1zM312 23h1v62h-1zM313 10h1v89h-1zM314 19h1v71h-1zM315 17h1v75h-1zM316 40h1v28h-1zM317 39h1v31h-1zM318 0h1v108h-1zM319 36h1v36h-1zM320 0h1v108h-1zM321 19h1v70h-1zM322 22h1v65h-1zM323 1h1v107h-1zM324 37h1v33h-1zM325 0h1v108h-1zM326 0h1v108h-1zM327 0h1v108h-1zM328 0h1v108h-1zM329 39h1v30h-1zM330 39h1v30h-1zM331 11h1v87h-1zM332 0h1v108h-1zM333 0h1v108h-1zM334 0h1v108h-1zM335 0h1v108h-1zM336 2h1v103h-1zM337 3h1v102h-1zM338 0h1v108h-1zM339 0h1v107h-1zM340 0h1v108h-1zM341 21h1v65h-1zM342 0h1v108h-1zM343 28h1v51h-1zM344 29h1v49h-1zM345 23h1v61h-1zM346 25h1v57h-1zM347 0h1v108h-1zM348 0h1v108h-1zM349 0h1v108h-1zM350 0h1v108h-1zM351 13h1v82h-1zM352 0h1v108h-1zM353 0h1v108h-1zM354 0h1v108h-1zM355 3h1v101h-1zM356 0h1v108h-1zM357 0h1v108h-1zM358 0h1v108h-1zM359 19h1v71h-1zM360 0h1v108h-1zM361 0h1v108h-1zM362 9h1v89h-1zM363 0h1v108h-1zM364 0h1v108h-1zM365 0h1v108h-1zM366 34h1v40h-1zM367 35h1v38h-1zM368 0h1v108h-1zM369 0h1v108h-1zM370 0h1v108h-1zM371 30h1v47h-1zM372 0h1v108h-1zM373 0h1v108h-1zM374 24h1v61h-1zM375 21h1v68h-1zM376 39h1v31h-1zM377 0h1v108h-1zM378 35h1v37h-1zM379 0h1v108h-1zM380 25h1v57h-1zM381 21h1v66h-1zM382 0h1v107h-1zM383 0h1v108h-1zM384 5h1v99h-1zM385 7h1v96h-1zM386 11h1v89h-1zM387 19h1v70h-1zM388 15h1v80h-1zM389 15h1v77h-1zM390 21h1v65h-1zM391 5h1v99h-1zM392 2h1v102h-1zM393 21h1v65h-1zM394 18h1v74h-1zM395 13h1v83h-1zM396 1h1v107h-1zM397 11h1v84h-1zM398 0h1v108h-1zM399 0h1v108h-1zM400 0h1v108h-1zM401 1h1v107h-1zM402 0h1v108h-1zM403 4h1v99h-1zM404 0h1v108h-1zM405 17h1v75h-1zM406 18h1v70h-1zM407 14h1v79h-1zM408 25h1v57h-1zM409 28h1v52h-1zM410 0h1v108h-1zM411 0h1v108h-1zM412 0h1v108h-1zM413 6h1v98h-1zM414 7h1v92h-1zM415 20h1v69h-1zM416 22h1v65h-1zM417 0h1v108h-1zM418 0h1v108h-1zM419 0h1v108h-1zM420 0h1v108h-1zM421 0h1v108h-1zM422 3h1v104h-1zM423 13h1v84h-1zM424 0h1v108h-1zM425 0h1v108h-1zM426 0h1v108h-1zM427 0h1v108h-1zM428 3h1v100h-1zM429 0h1v108h-1zM430 0h1v108h-1zM431 0h1v108h-1zM432 1h1v106h-1zM433 8h1v92h-1zM434 0h1v108h-1zM435 0h1v108h-1zM436 14h1v79h-1zM437 0h1v108h-1zM438 37h1v34h-1zM439 0h1v108h-1zM440 0h1v107h-1zM441 0h1v108h-1zM442 0h1v108h-1zM443 1h1v107h-1zM444 0h1v108h-1zM445 0h1v108h-1zM446 6h1v94h-1zM447 3h1v103h-1zM448 0h1v108h-1zM449 0h1v108h-1zM450 0h1v108h-1zM451 0h1v107h-1zM452 26h1v56h-1zM453 26h1v55h-1zM454 0h1v108h-1zM455 0h1v108h-1zM456 0h1v108h-1zM457 0h1v108h-1zM458 2h1v105h-1zM459 0h1v108h-1zM460 15h1v76h-1zM461 30h1v49h-1zM462 0h1v108h-1zM463 0h1v108h-1zM464 40h1v28h-1zM465 0h1v108h-1zM466 0h1v108h-1zM467 1h1v105h-1zM468 0h1v108h-1zM469 0h1v108h-1zM470 0h1v108h-1zM471 3h1v103h-1zM472 0h1v108h-1zM473 0h1v108h-1zM474 0h1v108h-1zM475 0h1v108h-1zM476 0h1v108h-1zM477 21h1v67h-1zM478 11h1v83h-1zM479 0h1v108h-1zM480 0h1v108h-1zM481 9h1v92h-1zM482 21h1v65h-1zM483 0h1v108h-1zM484 0h1v108h-1zM485 0h1v108h-1zM486 0h1v108h-1zM487 1h1v107h-1zM488 0h1v108h-1zM489 4h1v101h-1zM490 0h1v108h-1zM491 0h1v108h-1zM492 22h1v65h-1zM493 0h1v108h-1zM494 0h1v108h-1zM495 11h1v87h-1zM496 0h1v108h-1zM497 0h1v108h-1zM498 0h1v108h-1zM499 1h1v107h-1zM500 14h1v80h-1zM501 18h1v74h-1zM502 12h1v84h-1zM503 13h1v82h-1zM504 44h1v19h-1zM505 11h1v85h-1zM506 8h1v92h-1zM507 14h1v81h-1zM508 31h1v46h-1zM509 19h1v69h-1zM510 23h1v62h-1zM511 2h1v104h-1zM512 9h1v88h-1zM513 41h1v26h-1zM514 9h1v90h-1zM515 0h1v108h-1zM516 1h1v106h-1zM517 15h1v78h-1zM518 2h1v106h-1zM519 30h1v47h-1zM520 0h1v108h-1zM521 0h1v108h-1zM522 0h1v108h-1zM523 0h1v107h-1zM524 13h1v83h-1zM525 0h1v108h-1zM526 1h1v104h-1zM527 37h1v34h-1zM528 12h1v86h-1zM529 7h1v96h-1zM530 4h1v101h-1zM531 0h1v108h-1zM532 0h1v108h-1zM533 0h1v107h-1zM534 0h1v108h-1zM535 30h1v47h-1zM536 34h1v41h-1zM537 11h1v87h-1zM538 7h1v95h-1zM539 40h1v28h-1zM540 0h1v108h-1zM541 37h1v34h-1zM542 38h1v32h-1zM543 39h1v29h-1zM544 24h1v60h-1zM545 23h1v61h-1zM546 0h1v108h-1zM547 0h1v108h-1zM548 0h1v108h-1zM549 0h1v108h-1zM550 0h1v108h-1zM551 0h1v108h-1zM552 5h1v96h-1zM553 0h1v108h-1zM554 0h1v108h-1zM555 0h1v108h-1zM556 10h1v90h-1zM557 10h1v87h-1zM558 0h1v108h-1zM559 0h1v108h-1zM560 12h1v84h-1zM561 6h1v94h-1zM562 0h1v108h-1zM563 0h1v108h-1zM564 0h1v108h-1zM565 0h1v108h-1zM566 14h1v81h-1zM567 6h1v93h-1zM568 19h1v70h-1zM569 19h1v70h-1zM570 39h1v30h-1zM571 0h1v108h-1zM572 0h1v108h-1zM573 0h1v108h-1zM574 0h1v107h-1zM575 0h1v108h-1zM576 0h1v108h-1zM577 0h1v108h-1zM578 0h1v108h-1zM579 0h1v108h-1zM580 1h1v107h-1zM581 37h1v35h-1zM582 0h1v108h-1zM583 1h1v107h-1zM584 0h1v108h-1zM585 0h1v108h-1zM586 1h1v107h-1zM587 0h1v108h-1zM588 27h1v53h-1zM589 10h1v89h-1zM590 5h1v97h-1zM591 0h1v108h-1zM592 37h1v35h-1zM593 0h1v108h-1zM594 0h1v108h-1zM595 0h1v108h-1zM596 19h1v70h-1zM597 15h1v76h-1zM598 0h1v108h-1zM599 0h1v108h-1zM600 0h1v108h-1zM601 0h1v108h-1zM602 0h1v108h-1zM603 0h1v108h-1zM604 0h1v108h-1zM605 23h1v60h-1zM606 22h1v64h-1zM607 11h1v87h-1zM608 32h1v44h-1zM609 40h1v28h-1zM610 0h1v108h-1zM611 0h1v108h-1zM612 38h1v32h-1zM613 36h1v36h-1zM614 0h1v108h-1zM615 0h1v108h-1zM616 0h1v108h-1zM617 0h1v108h-1zM618 12h1v83h-1zM619 0h1v108h-1zM620 0h1v107h-1zM621 0h1v107h-1zM622 2h1v103h-1zM623 0h1v108h-1zM624 0h1v108h-1zM625 1h1v107h-1zM626 0h1v108h-1zM627 0h1v108h-1zM628 0h1v108h-1zM629 6h1v95h-1zM630 0h1v108h-1zM631 0h1v108h-1zM632 0h1v108h-1zM633 1h1v107h-1zM634 1h1v107h-1zM635 1h1v107h-1zM636 0h1v108h-1zM637 0h1v108h-1zM638 34h1v40h-1zM639 20h1v67h-1zM640 0h1v108h-1zM641 0h1v108h-1zM642 0h1v108h-1zM643 5h1v99h-1zM644 0h1v108h-1zM645 10h1v89h-1zM646 2h1v105h-1zM647 30h1v47h-1zM648 34h1v40h-1zM649 16h1v76h-1zM650 23h1v62h-1zM651 43h1v22h-1zM652 43h1v22h-1zM653 11h1v85h-1zM654 0h1v108h-1zM655 0h1v108h-1zM656 0h1v107h-1zM657 0h1v108h-1zM658 30h1v47h-1zM659 0h1v108h-1zM660 5h1v99h-1zM661 0h1v107h-1zM662 1h1v107h-1zM663 0h1v108h-1zM664 17h1v75h-1zM665 18h1v73h-1zM666 0h1v108h-1zM667 0h1v108h-1zM668 0h1v108h-1zM669 1h1v107h-1zM670 9h1v90h-1zM671 21h1v68h-1zM672 16h1v76h-1zM673 13h1v82h-1zM674 2h1v106h-1zM675 6h1v96h-1zM676 0h1v107h-1zM677 0h1v107h-1zM678 27h1v54h-1zM679 0h1v108h-1zM680 0h1v108h-1zM681 0h1v108h-1zM682 0h1v107h-1zM683 0h1v108h-1zM684 0h1v108h-1zM685 24h1v60h-1zM686 24h1v61h-1zM687 0h1v108h-1zM688 0h1v108h-1zM689 23h1v61h-1zM690 0h1v108h-1zM691 0h1v108h-1zM692 0h1v107h-1zM693 0h1v108h-1zM694 5h1v98h-1zM695 29h1v49h-1zM696 0h1v107h-1zM697 3h1v102h-1zM698 5h1v98h-1zM699 0h1v108h-1zM700 1h1v107h-1zM701 0h1v108h-1zM702 8h1v91h-1zM703 4h1v99h-1zM704 0h1v108h-1zM705 0h1v108h-1zM706 0h1v108h-1zM707 0h1v107h-1zM708 37h1v34h-1zM709 35h1v37h-1zM710 0h1v107h-1zM711 0h1v108h-1zM712 0h1v108h-1zM713 0h1v108h-1zM714 2h1v102h-1zM715 4h1v101h-1zM716 9h1v90h-1zM717 0h1v108h-1zM718 10h1v88h-1zM719 0h1v108h-1zM720 19h1v72h-1zM721 8h1v92h-1zM722 0h1v107h-1zM723 1h1v107h-1zM724 32h1v45h-1zM725 9h1v91h-1zM726 33h1v41h-1zM727 33h1v42h-1zM728 0h1v108h-1zM729 0h1v108h-1zM730 1h1v107h-1zM731 0h1v108h-1zM732 0h1v108h-1zM733 14h1v82h-1zM734 13h1v82h-1zM735 0h1v108h-1zM736 37h1v34h-1zM737 0h1v108h-1zM738 0h1v108h-1zM739 0h1v108h-1zM740 0h1v108h-1zM741 0h1v108h-1zM742 4h1v101h-1zM743 0h1v107h-1zM744 0h1v108h-1zM745 0h1v108h-1zM746 26h1v56h-1zM747 28h1v51h-1zM748 0h1v108h-1zM749 6h1v96h-1zM750 6h1v97h-1zM751 1h1v107h-1zM752 0h1v108h-1zM753 19h1v69h-1zM754 18h1v72h-1zM755 3h1v101h-1zM756 0h1v108h-1zM757 0h1v108h-1zM758 1h1v107h-1zM759 8h1v94h-1zM760 0h1v108h-1zM761 0h1v108h-1zM762 0h1v108h-1zM763 0h1v108h-1zM764 5h1v96h-1zM765 8h1v91h-1zM766 0h1v108h-1zM767 0h1v108h-1zM768 26h1v56h-1zM769 12h1v83h-1zM770 27h1v55h-1zM771 31h1v48h-1zM772 34h1v40h-1zM773 35h1v38h-1zM774 32h1v45h-1zM775 39h1v31h-1zM776 33h1v42h-1zM777 35h1v38h-1zM778 34h1v41h-1zM779 23h1v62h-1zM780 21h1v67h-1zM781 20h1v72h-1zM782 34h1v39h-1zM783 34h1v41h-1zM784 33h1v41h-1zM785 37h1v35h-1zM786 36h1v36h-1zM787 36h1v36h-1zM788 33h1v41h-1zM789 37h1v35h-1zM790 36h1v35h-1zM791 36h1v36h-1zM792 32h1v43h-1zM793 27h1v53h-1zM794 21h1v63h-1zM795 28h1v52h-1zM796 33h1v43h-1zM797 24h1v59h-1zM798 37h1v34h-1zM799 38h1v32h-1zM800 37h1v34h-1zM801 35h1v37h-1zM802 27h1v53h-1zM803 23h1v63h-1zM804 37h1v34h-1zM805 35h1v39h-1zM806 20h1v68h-1zM807 22h1v66h-1zM808 32h1v44h-1zM809 38h1v33h-1zM810 22h1v64h-1zM811 22h1v62h-1zM812 24h1v61h-1zM813 35h1v37h-1zM814 37h1v35h-1zM815 37h1v33h-1zM816 27h1v54h-1zM817 19h1v68h-1zM818 25h1v58h-1zM819 33h1v42h-1zM820 26h1v56h-1zM821 35h1v38h-1zM822 32h1v44h-1zM823 35h1v37h-1zM824 21h1v67h-1zM825 24h1v61h-1zM826 23h1v63h-1zM827 33h1v43h-1zM828 35h1v39h-1zM829 35h1v37h-1zM830 33h1v44h-1zM831 38h1v34h-1zM832 16h1v76h-1zM833 23h1v62h-1zM834 36h1v35h-1zM835 21h1v66h-1zM836 34h1v41h-1zM837 21h1v67h-1zM838 17h1v73h-1zM839 33h1v42h-1zM840 36h1v35h-1zM841 28h1v53h-1zM842 34h1v39h-1zM843 19h1v73h-1zM844 21h1v67h-1zM845 25h1v59h-1zM846 36h1v36h-1zM847 33h1v42h-1zM848 35h1v38h-1zM849 38h1v31h-1zM850 29h1v49h-1zM851 9h1v92h-1zM852 7h1v91h-1zM853 18h1v69h-1zM854 18h1v72h-1zM855 0h1v108h-1zM856 0h1v108h-1zM857 0h1v108h-1zM858 0h1v108h-1zM859 0h1v108h-1zM860 0h1v108h-1zM861 4h1v100h-1zM862 0h1v108h-1zM863 0h1v107h-1zM864 2h1v104h-1zM865 0h1v108h-1zM866 39h1v30h-1zM867 0h1v108h-1zM868 0h1v108h-1zM869 0h1v108h-1zM870 1h1v107h-1zM871 0h1v108h-1zM872 0h1v108h-1zM873 0h1v107h-1zM874 0h1v108h-1zM875 0h1v107h-1zM876 0h1v108h-1zM877 0h1v108h-1zM878 1h1v107h-1zM879 0h1v108h-1zM880 11h1v86h-1zM881 8h1v91h-1zM882 0h1v108h-1zM883 0h1v108h-1zM884 1h1v106h-1zM885 35h1v37h-1zM886 0h1v108h-1zM887 18h1v71h-1zM888 23h1v63h-1zM889 17h1v75h-1zM890 18h1v72h-1zM891 1h1v107h-1zM892 0h1v108h-1zM893 0h1v108h-1zM894 0h1v108h-1zM895 0h1v107h-1zM896 0h1v108h-1zM897 0h1v108h-1zM898 0h1v108h-1zM899 0h1v107h-1zM900 0h1v108h-1zM901 29h1v51h-1zM902 15h1v79h-1zM903 13h1v81h-1zM904 10h1v89h-1zM905 0h1v108h-1zM906 6h1v95h-1zM907 0h1v108h-1zM908 0h1v108h-1zM909 0h1v108h-1zM910 0h1v107h-1zM911 33h1v43h-1zM912 0h1v107h-1zM913 1h1v107h-1zM914 1h1v106h-1zM915 15h1v77h-1zM916 20h1v68h-1zM917 21h1v67h-1zM918 38h1v33h-1zM919 11h1v86h-1zM920 0h1v107h-1zM921 0h1v108h-1zM922 14h1v79h-1zM923 35h1v38h-1zM924 0h1v108h-1zM925 3h1v100h-1zM926 0h1v108h-1zM927 9h1v89h-1zM928 13h1v83h-1zM929 1h1v107h-1zM930 0h1v108h-1zM931 21h1v67h-1zM932 38h1v32h-1zM933 33h1v42h-1zM934 34h1v40h-1zM935 0h1v108h-1zM936 0h1v108h-1zM937 0h1v108h-1zM938 0h1v108h-1zM939 0h1v108h-1zM940 0h1v108h-1zM941 0h1v108h-1zM942 0h1v108h-1zM943 24h1v60h-1zM944 0h1v108h-1zM945 0h1v108h-1zM946 0h1v108h-1zM947 0h1v108h-1zM948 34h1v40h-1zM949 7h1v95h-1zM950 0h1v108h-1zM951 0h1v108h-1zM952 0h1v108h-1zM953 0h1v108h-1zM954 33h1v41h-1zM955 8h1v94h-1zM956 0h1v107h-1zM957 0h1v106h-1zM958 6h1v96h-1zM959 6h1v96h-1zM960 7h1v95h-1zM961 25h1v57h-1zM962 35h1v38h-1zM963 0h1v106h-1zM964 0h1v108h-1zM965 0h1v108h-1zM966 0h1v108h-1zM967 1h1v107h-1zM968 28h1v54h-1zM969 0h1v108h-1zM970 29h1v51h-1zM971 0h1v108h-1zM972 0h1v108h-1zM973 0h1v108h-1zM974 0h1v108h-1zM975 34h1v40h-1zM976 35h1v38h-1zM977 0h1v108h-1zM978 8h1v92h-1zM979 11h1v85h-1zM980 1h1v104h-1zM981 0h1v108h-1zM982 7h1v96h-1zM983 0h1v108h-1zM984 0h1v107h-1zM985 0h1v108h-1zM986 0h1v108h-1zM987 15h1v78h-1zM988 0h1v108h-1zM989 0h1v108h-1zM990 0h1v108h-1zM991 1h1v107h-1zM992 19h1v69h-1zM993 22h1v64h-1zM994 25h1v57h-1zM995 1h1v107h-1zM996 0h1v108h-1zM997 16h1v77h-1zM998 0h1v108h-1zM999 1h1v107h-1zM1000 1h1v107h-1zM1001 0h1v108h-1zM1002 0h1v108h-1zM1003 0h1v108h-1zM1004 12h1v85h-1zM1005 0h1v108h-1zM1006 0h1v108h-1zM1007 31h1v46h-1zM1008 0h1v108h-1zM1009 7h1v93h-1zM1010 1h1v107h-1zM1011 0h1v108h-1zM1012 4h1v101h-1zM1013 0h1v108h-1zM1014 26h1v56h-1zM1015 34h1v41h-1zM1016 32h1v44h-1zM1017 0h1v108h-1zM1018 0h1v108h-1zM1019 0h1v108h-1zM1020 8h1v93h-1zM1021 8h1v91h-1zM1022 0h1v108h-1zM1023 2h1v102h-1zM1024 0h1v108h-1zM1025 0h1v108h-1zM1026 0h1v108h-1zM1027 15h1v79h-1zM1028 0h1v108h-1zM1029 0h1v107h-1zM1030 31h1v45h-1zM1031 14h1v78h-1zM1032 17h1v74h-1zM1033 0h1v108h-1zM1034 0h1v108h-1zM1035 0h1v108h-1zM1036 1h1v107h-1zM1037 0h1v108h-1zM1038 3h1v103h-1zM1039 30h1v47h-1zM1040 34h1v40h-1zM1041 6h1v96h-1zM1042 0h1v108h-1zM1043 0h1v108h-1zM1044 0h1v108h-1z"/>
<path fill="url(#gr)" d="M0 166h1v4h-1zM1 166h1v4h-1zM2 167h1v2h-1zM3 167h1v2h-1zM4 167h1v2h-1zM5 167h1v2h-1zM6 166h1v4h-1zM7 165h1v6h-1zM8 166h1v4h-1zM9 166h1v4h-1zM10 166h1v4h-1zM11 166h1v4h-1zM12 166h1v4h-1zM13 165h1v6h-1zM14 166h1v4h-1zM15 164h1v8h-1zM16 166h1v4h-1zM17 166h1v5h-1zM18 166h1v4h-1zM19 164h1v8h-1zM20 165h1v6h-1zM21 165h1v6h-1zM22 162h1v11h-1zM23 160h1v17h-1zM24 162h1v11h-1zM25 154h1v27h-1zM26 160h1v17h-1zM27 158h1v20h-1zM28 157h1v23h-1zM29 155h1v26h-1zM30 144h1v49h-1zM31 152h1v30h-1zM32 152h1v33h-1zM33 148h1v40h-1zM34 150h1v35h-1zM35 141h1v53h-1zM36 152h1v32h-1zM37 149h1v36h-1zM38 135h1v63h-1zM39 150h1v37h-1zM40 150h1v34h-1zM41 153h1v31h-1zM42 146h1v43h-1zM43 152h1v34h-1zM44 138h1v60h-1zM45 141h1v59h-1zM46 150h1v37h-1zM47 154h1v30h-1zM48 152h1v33h-1zM49 149h1v36h-1zM50 154h1v29h-1zM51 153h1v30h-1zM52 149h1v34h-1zM53 148h1v38h-1zM54 142h1v51h-1zM55 144h1v46h-1zM56 151h1v33h-1zM57 156h1v28h-1zM58 152h1v32h-1zM59 152h1v33h-1zM60 148h1v37h-1zM61 154h1v29h-1zM62 154h1v27h-1zM63 153h1v29h-1zM64 145h1v45h-1zM65 137h1v66h-1zM66 157h1v23h-1zM67 155h1v27h-1zM68 157h1v22h-1zM69 153h1v29h-1zM70 146h1v47h-1zM71 155h1v26h-1zM72 156h1v22h-1zM73 142h1v48h-1zM74 145h1v48h-1zM75 156h1v24h-1zM76 155h1v27h-1zM77 153h1v31h-1zM78 155h1v27h-1zM79 155h1v27h-1zM80 156h1v23h-1zM81 148h1v37h-1zM82 151h1v35h-1zM83 149h1v38h-1zM84 152h1v33h-1zM85 156h1v24h-1zM86 145h1v48h-1zM87 155h1v25h-1zM88 154h1v28h-1zM89 153h1v28h-1zM90 142h1v52h-1zM91 156h1v23h-1zM92 151h1v35h-1zM93 155h1v26h-1zM94 148h1v45h-1zM95 158h1v20h-1zM96 155h1v25h-1zM97 142h1v51h-1zM98 158h1v22h-1zM99 158h1v20h-1zM100 153h1v30h-1zM101 155h1v25h-1zM102 148h1v38h-1zM103 158h1v20h-1zM104 156h1v23h-1zM105 146h1v42h-1zM106 156h1v25h-1zM107 146h1v43h-1zM108 156h1v26h-1zM109 157h1v20h-1zM110 152h1v33h-1zM111 137h1v59h-1zM112 137h1v60h-1zM113 126h1v81h-1zM114 112h1v112h-1zM115 112h1v108h-1zM116 116h1v105h-1zM117 112h1v111h-1zM118 116h1v108h-1zM119 113h1v111h-1zM120 116h1v108h-1zM121 112h1v112h-1zM122 140h1v60h-1zM123 113h1v106h-1zM124 112h1v111h-1zM125 112h1v112h-1zM126 146h1v40h-1zM127 112h1v112h-1zM128 112h1v111h-1zM129 114h1v110h-1zM130 124h1v84h-1zM131 114h1v110h-1zM132 113h1v111h-1zM133 116h1v108h-1zM134 113h1v105h-1zM135 112h1v112h-1zM136 112h1v110h-1zM137 128h1v82h-1zM138 112h1v112h-1zM139 113h1v110h-1zM140 117h1v107h-1zM141 115h1v109h-1zM142 112h1v111h-1zM143 112h1v112h-1zM144 113h1v111h-1zM145 112h1v112h-1zM146 112h1v110h-1zM147 112h1v112h-1zM148 144h1v46h-1zM149 144h1v46h-1zM150 124h1v83h-1zM151 121h1v97h-1zM152 136h1v69h-1zM153 132h1v74h-1zM154 144h1v44h-1zM155 117h1v102h-1zM156 121h1v95h-1zM157 112h1v104h-1zM158 112h1v109h-1zM159 113h1v111h-1zM160 117h1v107h-1zM161 117h1v100h-1zM162 115h1v109h-1zM163 112h1v112h-1zM164 112h1v111h-1zM165 112h1v112h-1zM166 112h1v109h-1zM167 112h1v110h-1zM168 126h1v81h-1zM169 136h1v62h-1zM170 120h1v94h-1zM171 112h1v112h-1zM172 114h1v110h-1zM173 134h1v64h-1zM174 112h1v110h-1zM175 115h1v104h-1zM176 112h1v109h-1zM177 112h1v112h-1zM178 112h1v112h-1zM179 123h1v88h-1zM180 137h1v66h-1zM181 112h1v106h-1zM182 112h1v109h-1zM183 112h1v112h-1zM184 112h1v108h-1zM185 115h1v97h-1zM186 112h1v104h-1zM187 122h1v98h-1zM188 117h1v97h-1zM189 114h1v107h-1zM190 149h1v37h-1zM191 127h1v84h-1zM192 127h1v82h-1zM193 115h1v104h-1zM194 117h1v94h-1zM195 113h1v111h-1zM196 133h1v75h-1zM197 116h1v108h-1zM198 115h1v109h-1zM199 113h1v111h-1zM200 127h1v87h-1zM201 129h1v78h-1zM202 129h1v79h-1zM203 117h1v101h-1zM204 112h1v112h-1zM205 115h1v109h-1zM206 117h1v104h-1zM207 127h1v81h-1zM208 114h1v108h-1zM209 116h1v104h-1zM210 140h1v57h-1zM211 122h1v91h-1zM212 112h1v109h-1zM213 113h1v105h-1zM214 112h1v112h-1zM215 112h1v110h-1zM216 142h1v55h-1zM217 139h1v54h-1zM218 146h1v45h-1zM219 113h1v111h-1zM220 114h1v110h-1zM221 113h1v111h-1zM222 116h1v105h-1zM223 112h1v111h-1zM224 113h1v111h-1zM225 117h1v106h-1zM226 150h1v33h-1zM227 117h1v107h-1zM228 112h1v112h-1zM229 113h1v111h-1zM230 112h1v112h-1zM231 112h1v112h-1zM232 112h1v112h-1zM233 137h1v65h-1zM234 126h1v87h-1zM235 112h1v112h-1zM236 151h1v34h-1zM237 153h1v33h-1zM238 112h1v112h-1zM239 112h1v112h-1zM240 112h1v112h-1zM241 112h1v109h-1zM242 146h1v41h-1zM243 116h1v105h-1zM244 126h1v79h-1zM245 141h1v58h-1zM246 143h1v53h-1zM247 120h1v93h-1zM248 112h1v112h-1zM249 122h1v101h-1zM250 121h1v92h-1zM251 142h1v47h-1zM252 143h1v52h-1zM253 112h1v111h-1zM254 115h1v105h-1zM255 144h1v48h-1zM256 112h1v106h-1zM257 113h1v107h-1zM258 112h1v112h-1zM259 112h1v108h-1zM260 119h1v90h-1zM261 144h1v50h-1zM262 112h1v112h-1zM263 112h1v112h-1zM264 112h1v110h-1zM265 114h1v110h-1zM266 112h1v107h-1zM267 112h1v108h-1zM268 114h1v104h-1zM269 112h1v107h-1zM270 116h1v108h-1zM271 112h1v112h-1zM272 121h1v93h-1zM273 114h1v110h-1zM274 112h1v107h-1zM275 112h1v112h-1zM276 117h1v107h-1zM277 112h1v112h-1zM278 115h1v106h-1zM279 112h1v112h-1zM280 112h1v112h-1zM281 115h1v109h-1zM282 114h1v107h-1zM283 116h1v106h-1zM284 122h1v91h-1zM285 130h1v75h-1zM286 112h1v112h-1zM287 117h1v98h-1zM288 118h1v101h-1zM289 113h1v109h-1zM290 112h1v107h-1zM291 116h1v108h-1zM292 112h1v111h-1zM293 114h1v108h-1zM294 112h1v112h-1zM295 113h1v111h-1zM296 125h1v85h-1zM297 112h1v112h-1zM298 112h1v107h-1zM299 113h1v111h-1zM300 112h1v105h-1zM301 146h1v44h-1zM302 117h1v107h-1zM303 114h1v110h-1zM304 112h1v107h-1zM305 112h1v112h-1zM306 112h1v112h-1zM307 112h1v112h-1zM308 117h1v103h-1zM309 112h1v110h-1zM310 112h1v112h-1zM311 114h1v103h-1zM312 134h1v68h-1zM313 121h1v91h-1zM314 132h1v72h-1zM315 125h1v79h-1zM316 154h1v28h-1zM317 152h1v34h-1zM318 112h1v110h-1zM319 150h1v35h-1zM320 114h1v109h-1zM321 128h1v81h-1zM322 138h1v62h-1zM323 112h1v111h-1zM324 149h1v35h-1zM325 112h1v112h-1zM326 114h1v110h-1zM327 112h1v108h-1zM328 112h1v112h-1zM329 153h1v31h-1zM330 153h1v31h-1zM331 122h1v92h-1zM332 112h1v112h-1zM333 114h1v105h-1zM334 116h1v105h-1zM335 112h1v110h-1zM336 112h1v106h-1zM337 119h1v105h-1zM338 115h1v109h-1zM339 112h1v110h-1zM340 112h1v112h-1zM341 132h1v72h-1zM342 117h1v107h-1zM343 140h1v54h-1zM344 140h1v54h-1zM345 132h1v68h-1zM346 136h1v60h-1zM347 117h1v107h-1zM348 112h1v108h-1zM349 115h1v109h-1zM350 112h1v112h-1zM351 121h1v88h-1zM352 112h1v111h-1zM353 116h1v108h-1zM354 114h1v110h-1zM355 112h1v105h-1zM356 116h1v108h-1zM357 112h1v112h-1zM358 113h1v106h-1zM359 134h1v69h-1zM360 112h1v112h-1zM361 118h1v106h-1zM362 125h1v85h-1zM363 113h1v106h-1zM364 117h1v107h-1zM365 117h1v105h-1zM366 147h1v43h-1zM367 147h1v39h-1zM368 112h1v112h-1zM369 116h1v104h-1zM370 112h1v110h-1zM371 144h1v49h-1zM372 112h1v112h-1zM373 112h1v112h-1zM374 134h1v69h-1zM375 134h1v71h-1zM376 154h1v32h-1zM377 112h1v109h-1zM378 150h1v37h-1zM379 112h1v110h-1zM380 138h1v60h-1zM381 131h1v68h-1zM382 112h1v112h-1zM383 112h1v111h-1zM384 120h1v104h-1zM385 118h1v106h-1zM386 125h1v95h-1zM387 129h1v75h-1zM388 127h1v87h-1zM389 131h1v81h-1zM390 135h1v64h-1zM391 118h1v106h-1zM392 112h1v111h-1zM393 136h1v65h-1zM394 128h1v78h-1zM395 123h1v86h-1zM396 117h1v106h-1zM397 121h1v94h-1zM398 116h1v107h-1zM399 116h1v106h-1zM400 112h1v112h-1zM401 115h1v109h-1zM402 112h1v112h-1zM403 115h1v103h-1zM404 114h1v108h-1zM405 127h1v76h-1zM406 134h1v72h-1zM407 125h1v86h-1zM408 141h1v55h-1zM409 143h1v53h-1zM410 112h1v112h-1zM411 112h1v112h-1zM412 115h1v109h-1zM413 122h1v102h-1zM414 114h1v99h-1zM415 131h1v72h-1zM416 132h1v71h-1zM417 116h1v104h-1zM418 112h1v112h-1zM419 113h1v106h-1zM420 115h1v109h-1zM421 113h1v109h-1zM422 113h1v110h-1zM423 126h1v82h-1zM424 113h1v108h-1zM425 116h1v108h-1zM426 112h1v112h-1zM427 112h1v109h-1zM428 112h1v107h-1zM429 112h1v107h-1zM430 112h1v108h-1zM431 112h1v109h-1zM432 112h1v112h-1zM433 119h1v95h-1zM434 112h1v109h-1zM435 113h1v106h-1zM436 130h1v76h-1zM437 117h1v107h-1zM438 151h1v36h-1zM439 117h1v107h-1zM440 112h1v112h-1zM441 112h1v112h-1zM442 112h1v110h-1zM443 118h1v102h-1zM444 112h1v110h-1zM445 112h1v107h-1zM446 117h1v96h-1zM447 115h1v109h-1zM448 112h1v112h-1zM449 116h1v103h-1zM450 116h1v106h-1zM451 116h1v108h-1zM452 139h1v60h-1zM453 139h1v58h-1zM454 112h1v112h-1zM455 116h1v108h-1zM456 114h1v110h-1zM457 114h1v109h-1zM458 118h1v106h-1zM459 114h1v108h-1zM460 129h1v74h-1zM461 142h1v51h-1zM462 117h1v107h-1zM463 112h1v108h-1zM464 154h1v27h-1zM465 112h1v109h-1zM466 112h1v111h-1zM467 112h1v112h-1zM468 112h1v112h-1zM469 112h1v112h-1zM470 116h1v108h-1zM471 112h1v112h-1zM472 114h1v108h-1zM473 112h1v111h-1zM474 112h1v110h-1zM475 116h1v108h-1zM476 115h1v109h-1zM477 137h1v69h-1zM478 126h1v82h-1zM479 117h1v103h-1zM480 113h1v106h-1zM481 116h1v102h-1zM482 134h1v66h-1zM483 114h1v104h-1zM484 112h1v110h-1zM485 114h1v107h-1zM486 112h1v109h-1zM487 112h1v112h-1zM488 116h1v108h-1zM489 119h1v100h-1zM490 112h1v112h-1zM491 112h1v109h-1zM492 133h1v73h-1zM493 112h1v108h-1zM494 112h1v112h-1zM495 128h1v88h-1zM496 117h1v107h-1zM497 112h1v112h-1zM498 113h1v111h-1zM499 118h1v106h-1zM500 126h1v86h-1zM501 126h1v78h-1zM502 124h1v85h-1zM503 127h1v84h-1zM504 159h1v19h-1zM505 127h1v82h-1zM506 116h1v102h-1zM507 126h1v83h-1zM508 142h1v50h-1zM509 135h1v69h-1zM510 138h1v64h-1zM511 119h1v101h-1zM512 122h1v92h-1zM513 156h1v26h-1zM514 124h1v92h-1zM515 113h1v109h-1zM516 114h1v107h-1zM517 131h1v77h-1zM518 119h1v105h-1zM519 140h1v53h-1zM520 115h1v105h-1zM521 112h1v112h-1zM522 113h1v111h-1zM523 112h1v108h-1zM524 129h1v80h-1zM525 114h1v110h-1zM526 117h1v99h-1zM527 150h1v36h-1zM528 120h1v92h-1zM529 117h1v97h-1zM530 112h1v107h-1zM531 115h1v105h-1zM532 118h1v105h-1zM533 112h1v112h-1zM534 112h1v107h-1zM535 143h1v48h-1zM536 148h1v42h-1zM537 122h1v93h-1zM538 117h1v96h-1zM539 153h1v29h-1zM540 114h1v108h-1zM541 150h1v37h-1zM542 151h1v34h-1zM543 154h1v28h-1zM544 140h1v59h-1zM545 137h1v63h-1zM546 117h1v103h-1zM547 112h1v112h-1zM548 112h1v112h-1zM549 114h1v110h-1zM550 116h1v108h-1zM551 117h1v107h-1zM552 120h1v102h-1zM553 117h1v107h-1zM554 112h1v107h-1zM555 112h1v112h-1zM556 124h1v94h-1zM557 126h1v85h-1zM558 112h1v112h-1zM559 117h1v106h-1zM560 127h1v86h-1zM561 121h1v96h-1zM562 113h1v111h-1zM563 116h1v108h-1zM564 112h1v112h-1zM565 114h1v110h-1zM566 124h1v89h-1zM567 118h1v94h-1zM568 128h1v78h-1zM569 130h1v76h-1zM570 151h1v31h-1zM571 112h1v112h-1zM572 112h1v109h-1zM573 112h1v112h-1zM574 112h1v112h-1zM575 112h1v112h-1zM576 112h1v112h-1zM577 112h1v112h-1zM578 114h1v110h-1zM579 112h1v112h-1zM580 114h1v110h-1zM581 151h1v37h-1zM582 117h1v105h-1zM583 116h1v108h-1zM584 115h1v109h-1zM585 112h1v107h-1zM586 115h1v109h-1zM587 117h1v107h-1zM588 139h1v57h-1zM589 122h1v97h-1zM590 122h1v101h-1zM591 117h1v103h-1zM592 151h1v36h-1zM593 113h1v111h-1zM594 112h1v112h-1zM595 112h1v112h-1zM596 130h1v78h-1zM597 130h1v80h-1zM598 112h1v107h-1zM599 113h1v111h-1zM600 114h1v110h-1zM601 117h1v107h-1zM602 112h1v112h-1zM603 112h1v110h-1zM604 112h1v112h-1zM605 138h1v61h-1zM606 134h1v69h-1zM607 126h1v90h-1zM608 144h1v48h-1zM609 153h1v31h-1zM610 112h1v112h-1zM611 112h1v112h-1zM612 153h1v31h-1zM613 150h1v38h-1zM614 112h1v112h-1zM615 112h1v107h-1zM616 112h1v112h-1zM617 112h1v110h-1zM618 121h1v90h-1zM619 112h1v107h-1zM620 112h1v108h-1zM621 112h1v112h-1zM622 112h1v107h-1zM623 116h1v106h-1zM624 112h1v112h-1zM625 113h1v108h-1zM626 117h1v107h-1zM627 112h1v112h-1zM628 118h1v106h-1zM629 116h1v101h-1zM630 112h1v110h-1zM631 112h1v110h-1zM632 113h1v110h-1zM633 116h1v102h-1zM634 115h1v105h-1zM635 116h1v104h-1zM636 112h1v110h-1zM637 113h1v111h-1zM638 146h1v45h-1zM639 134h1v68h-1zM640 113h1v108h-1zM641 115h1v107h-1zM642 112h1v112h-1zM643 112h1v108h-1zM644 112h1v108h-1zM645 121h1v94h-1zM646 114h1v107h-1zM647 145h1v46h-1zM648 146h1v44h-1zM649 128h1v76h-1zM650 139h1v61h-1zM651 157h1v23h-1zM652 158h1v21h-1zM653 121h1v95h-1zM654 112h1v110h-1zM655 115h1v109h-1zM656 112h1v106h-1zM657 114h1v110h-1zM658 142h1v50h-1zM659 112h1v106h-1zM660 116h1v102h-1zM661 112h1v112h-1zM662 114h1v110h-1zM663 117h1v107h-1zM664 129h1v81h-1zM665 129h1v73h-1zM666 115h1v107h-1zM667 113h1v111h-1zM668 114h1v110h-1zM669 118h1v106h-1zM670 123h1v89h-1zM671 134h1v74h-1zM672 128h1v81h-1zM673 123h1v87h-1zM674 115h1v104h-1zM675 112h1v105h-1zM676 112h1v112h-1zM677 112h1v111h-1zM678 139h1v56h-1zM679 112h1v112h-1zM680 112h1v112h-1zM681 112h1v110h-1zM682 114h1v110h-1zM683 112h1v109h-1zM684 112h1v112h-1zM685 137h1v59h-1zM686 138h1v60h-1zM687 117h1v107h-1zM688 117h1v107h-1zM689 137h1v63h-1zM690 112h1v112h-1zM691 112h1v112h-1zM692 112h1v112h-1zM693 114h1v109h-1zM694 112h1v104h-1zM695 143h1v48h-1zM696 112h1v107h-1zM697 120h1v100h-1zM698 114h1v100h-1zM699 112h1v112h-1zM700 112h1v110h-1zM701 112h1v109h-1zM702 118h1v95h-1zM703 112h1v107h-1zM704 112h1v109h-1zM705 112h1v112h-1zM706 115h1v109h-1zM707 112h1v107h-1zM708 148h1v36h-1zM709 150h1v39h-1zM710 112h1v112h-1zM711 112h1v110h-1zM712 113h1v111h-1zM713 118h1v101h-1zM714 115h1v109h-1zM715 119h1v105h-1zM716 119h1v98h-1zM717 112h1v107h-1zM718 118h1v95h-1zM719 112h1v112h-1zM720 132h1v75h-1zM721 124h1v89h-1zM722 112h1v109h-1zM723 112h1v107h-1zM724 144h1v48h-1zM725 122h1v91h-1zM726 144h1v45h-1zM727 148h1v44h-1zM728 114h1v110h-1zM729 114h1v110h-1zM730 112h1v112h-1zM731 112h1v108h-1zM732 116h1v108h-1zM733 125h1v90h-1zM734 123h1v88h-1zM735 115h1v109h-1zM736 151h1v34h-1zM737 112h1v112h-1zM738 112h1v110h-1zM739 112h1v112h-1zM740 112h1v112h-1zM741 112h1v112h-1zM742 116h1v108h-1zM743 112h1v107h-1zM744 112h1v110h-1zM745 114h1v110h-1zM746 140h1v60h-1zM747 140h1v56h-1zM748 112h1v107h-1zM749 121h1v96h-1zM750 123h1v94h-1zM751 117h1v104h-1zM752 112h1v109h-1zM753 130h1v74h-1zM754 133h1v72h-1zM755 118h1v99h-1zM756 112h1v111h-1zM757 112h1v112h-1zM758 112h1v112h-1zM759 117h1v104h-1zM760 112h1v112h-1zM761 112h1v112h-1zM762 118h1v101h-1zM763 112h1v112h-1zM764 118h1v100h-1zM765 113h1v110h-1zM766 125h1v87h-1zM767 112h1v112h-1zM768 126h1v85h-1zM769 112h1v112h-1zM770 125h1v83h-1zM771 137h1v64h-1zM772 123h1v87h-1zM773 139h1v60h-1zM774 124h1v89h-1zM775 137h1v60h-1zM776 143h1v51h-1zM777 146h1v43h-1zM778 145h1v45h-1zM779 128h1v79h-1zM780 147h1v43h-1zM781 122h1v91h-1zM782 140h1v56h-1zM783 121h1v96h-1zM784 140h1v56h-1zM785 140h1v54h-1zM786 144h1v49h-1zM787 139h1v57h-1zM788 146h1v46h-1zM789 125h1v90h-1zM790 139h1v60h-1zM791 122h1v90h-1zM792 142h1v53h-1zM793 144h1v50h-1zM794 137h1v61h-1zM795 142h1v51h-1zM796 146h1v44h-1zM797 113h1v107h-1zM798 140h1v56h-1zM799 139h1v58h-1zM800 136h1v62h-1zM801 145h1v47h-1zM802 144h1v47h-1zM803 146h1v44h-1zM804 147h1v43h-1zM805 121h1v95h-1zM806 120h1v93h-1zM807 132h1v74h-1zM808 145h1v46h-1zM809 146h1v43h-1zM810 140h1v57h-1zM811 145h1v47h-1zM812 127h1v80h-1zM813 119h1v99h-1zM814 139h1v56h-1zM815 115h1v106h-1zM816 139h1v58h-1zM817 144h1v48h-1zM818 146h1v43h-1zM819 141h1v52h-1zM820 123h1v90h-1zM821 143h1v48h-1zM822 139h1v58h-1zM823 141h1v55h-1zM824 146h1v45h-1zM825 137h1v60h-1zM826 142h1v52h-1zM827 126h1v84h-1zM828 147h1v43h-1zM829 143h1v53h-1zM830 142h1v52h-1zM831 124h1v88h-1zM832 143h1v52h-1zM833 143h1v52h-1zM834 128h1v82h-1zM835 119h1v102h-1zM836 125h1v87h-1zM837 124h1v87h-1zM838 145h1v45h-1zM839 133h1v73h-1zM840 142h1v52h-1zM841 145h1v47h-1zM842 125h1v87h-1zM843 137h1v62h-1zM844 131h1v74h-1zM845 146h1v44h-1zM846 143h1v51h-1zM847 140h1v56h-1zM848 143h1v51h-1zM849 147h1v44h-1zM850 135h1v64h-1zM851 136h1v63h-1zM852 112h1v112h-1zM853 127h1v81h-1zM854 118h1v101h-1zM855 113h1v111h-1zM856 113h1v111h-1zM857 112h1v112h-1zM858 112h1v112h-1zM859 140h1v55h-1zM860 112h1v111h-1zM861 134h1v68h-1zM862 112h1v112h-1zM863 121h1v95h-1zM864 112h1v106h-1zM865 112h1v108h-1zM866 152h1v33h-1zM867 117h1v105h-1zM868 117h1v103h-1zM869 112h1v112h-1zM870 113h1v111h-1zM871 112h1v112h-1zM872 112h1v111h-1zM873 112h1v107h-1zM874 113h1v111h-1zM875 112h1v109h-1zM876 112h1v112h-1zM877 112h1v112h-1zM878 116h1v106h-1zM879 112h1v106h-1zM880 124h1v90h-1zM881 115h1v103h-1zM882 112h1v112h-1zM883 115h1v109h-1zM884 113h1v107h-1zM885 149h1v39h-1zM886 112h1v111h-1zM887 132h1v73h-1zM888 134h1v66h-1zM889 132h1v73h-1zM890 133h1v73h-1zM891 112h1v112h-1zM892 117h1v107h-1zM893 113h1v111h-1zM894 112h1v112h-1zM895 112h1v112h-1zM896 115h1v109h-1zM897 118h1v105h-1zM898 112h1v110h-1zM899 112h1v112h-1zM900 112h1v111h-1zM901 144h1v49h-1zM902 130h1v77h-1zM903 122h1v87h-1zM904 118h1v99h-1zM905 117h1v107h-1zM906 121h1v96h-1zM907 112h1v112h-1zM908 115h1v107h-1zM909 112h1v111h-1zM910 113h1v111h-1zM911 145h1v47h-1zM912 116h1v107h-1zM913 112h1v112h-1zM914 112h1v106h-1zM915 125h1v83h-1zM916 135h1v71h-1zM917 136h1v71h-1zM918 150h1v35h-1zM919 124h1v92h-1zM920 113h1v111h-1zM921 112h1v112h-1zM922 126h1v81h-1zM923 146h1v43h-1zM924 115h1v109h-1zM925 114h1v110h-1zM926 114h1v109h-1zM927 120h1v93h-1zM928 123h1v85h-1zM929 116h1v108h-1zM930 112h1v107h-1zM931 132h1v75h-1zM932 153h1v31h-1zM933 145h1v44h-1zM934 148h1v43h-1zM935 112h1v112h-1zM936 112h1v112h-1zM937 112h1v111h-1zM938 117h1v104h-1zM939 112h1v111h-1zM940 117h1v107h-1zM941 113h1v108h-1zM942 113h1v111h-1zM943 140h1v62h-1zM944 114h1v110h-1zM945 112h1v110h-1zM946 112h1v112h-1zM947 112h1v112h-1zM948 148h1v42h-1zM949 118h1v97h-1zM950 112h1v112h-1zM951 112h1v112h-1zM952 112h1v112h-1zM953 112h1v108h-1zM954 147h1v41h-1zM955 123h1v96h-1zM956 112h1v106h-1zM957 117h1v100h-1zM958 118h1v99h-1zM959 115h1v101h-1zM960 118h1v100h-1zM961 138h1v56h-1zM962 146h1v42h-1zM963 114h1v110h-1zM964 112h1v110h-1zM965 112h1v112h-1zM966 116h1v108h-1zM967 114h1v110h-1zM968 140h1v57h-1zM969 112h1v112h-1zM970 143h1v52h-1zM971 112h1v112h-1zM972 117h1v103h-1zM973 117h1v103h-1zM974 113h1v111h-1zM975 149h1v42h-1zM976 146h1v40h-1zM977 114h1v110h-1zM978 123h1v94h-1zM979 120h1v95h-1zM980 112h1v112h-1zM981 114h1v109h-1zM982 116h1v99h-1zM983 112h1v112h-1zM984 113h1v111h-1zM985 112h1v112h-1zM986 115h1v107h-1zM987 129h1v79h-1zM988 112h1v112h-1zM989 112h1v112h-1zM990 112h1v109h-1zM991 116h1v108h-1zM992 134h1v73h-1zM993 138h1v61h-1zM994 137h1v58h-1zM995 112h1v112h-1zM996 117h1v106h-1zM997 132h1v77h-1zM998 112h1v112h-1zM999 112h1v110h-1zM1000 112h1v112h-1zM1001 117h1v104h-1zM1002 112h1v109h-1zM1003 116h1v108h-1zM1004 121h1v91h-1zM1005 112h1v112h-1zM1006 112h1v108h-1zM1007 145h1v49h-1zM1008 112h1v110h-1zM1009 123h1v92h-1zM1010 117h1v103h-1zM1011 112h1v110h-1zM1012 120h1v104h-1zM1013 117h1v106h-1zM1014 138h1v62h-1zM1015 146h1v46h-1zM1016 143h1v49h-1zM1017 112h1v109h-1zM1018 117h1v107h-1zM1019 112h1v108h-1zM1020 116h1v99h-1zM1021 124h1v89h-1zM1022 112h1v108h-1zM1023 116h1v107h-1zM1024 114h1v110h-1zM1025 118h1v104h-1zM1026 112h1v110h-1zM1027 127h1v80h-1zM1028 112h1v108h-1zM1029 112h1v111h-1zM1030 146h1v43h-1zM1031 128h1v80h-1zM1032 131h1v74h-1zM1033 112h1v112h-1zM1034 115h1v107h-1zM1035 117h1v107h-1zM1036 114h1v110h-1zM1037 117h1v107h-1zM1038 115h1v104h-1zM1039 142h1v52h-1zM1040 146h1v43h-1zM1041 122h1v101h-1zM1042 116h1v108h-1zM1043 112h1v112h-1zM1044 112h1v109h-1z"/>
<line x1="0" y1="168" x2="1045" y2="168" stroke="#d0b8b8" stroke-width="2" stroke-dasharray="5 4"/><line x1="0" y1="54" x2="1045" y2="54" stroke="#bcbcbc" stroke-width="1" stroke-dasharray="5 4"/>
</svg>
<div style="left:26px;top:392px;width:3px;height:224px;background:#2a90e8;"></div>
<div style="left:26px;top:473px;width:6px;height:61px;background:#3aa0f0;"></div>
<svg style="left:28px;top:393px" width="3" height="224"><rect x="0" y="0" width="3" height="1" fill="#9ad0ff"/><rect x="0" y="7" width="3" height="1" fill="#9ad0ff"/><rect x="0" y="14" width="3" height="1" fill="#9ad0ff"/><rect x="0" y="21" width="3" height="1" fill="#9ad0ff"/><rect x="0" y="28" width="3" height="1" fill="#9ad0ff"/><rect x="0" y="35" width="3" height="1" fill="#9ad0ff"/><rect x="0" y="42" width="3" height="1" fill="#9ad0ff"/><rect x="0" y="49" width="3" height="1" fill="#9ad0ff"/><rect x="0" y="56" width="3" height="1" fill="#9ad0ff"/><rect x="0" y="63" width="3" height="1" fill="#9ad0ff"/><rect x="0" y="70" width="3" height="1" fill="#9ad0ff"/><rect x="0" y="77" width="3" height="1" fill="#9ad0ff"/><rect x="0" y="84" width="3" height="1" fill="#9ad0ff"/><rect x="0" y="91" width="3" height="1" fill="#9ad0ff"/><rect x="0" y="98" width="3" height="1" fill="#9ad0ff"/><rect x="0" y="105" width="3" height="1" fill="#9ad0ff"/><rect x="0" y="112" width="3" height="1" fill="#9ad0ff"/><rect x="0" y="119" width="3" height="1" fill="#9ad0ff"/><rect x="0" y="126" width="3" height="1" fill="#9ad0ff"/><rect x="0" y="133" width="3" height="1" fill="#9ad0ff"/><rect x="0" y="140" width="3" height="1" fill="#9ad0ff"/><rect x="0" y="147" width="3" height="1" fill="#9ad0ff"/><rect x="0" y="154" width="3" height="1" fill="#9ad0ff"/><rect x="0" y="161" width="3" height="1" fill="#9ad0ff"/><rect x="0" y="168" width="3" height="1" fill="#9ad0ff"/><rect x="0" y="175" width="3" height="1" fill="#9ad0ff"/><rect x="0" y="182" width="3" height="1" fill="#9ad0ff"/><rect x="0" y="189" width="3" height="1" fill="#9ad0ff"/><rect x="0" y="196" width="3" height="1" fill="#9ad0ff"/><rect x="0" y="203" width="3" height="1" fill="#9ad0ff"/><rect x="0" y="210" width="3" height="1" fill="#9ad0ff"/><rect x="0" y="217" width="3" height="1" fill="#9ad0ff"/></svg>
<div style="left:103px;top:392px;width:2px;height:224px;background:#90c8b0;"></div>
<svg style="left:92px;top:490px" width="29" height="28"><path d="M2.5 1.5L28 14L2.5 26.5Z" fill="#c0ffc0" stroke="#10f010" stroke-width="1.6"/></svg>
<div class="t " style="left:34px;top:398px;font-size:15px;color:#a8a8a8;">1</div>
<div class="t " style="left:34px;top:452px;font-size:15px;color:#a8a8a8;">0</div>
<div class="t " style="left:34px;top:509px;font-size:15px;color:#a8a8a8;">1</div>
<div class="t " style="left:34px;top:565px;font-size:15px;color:#a8a8a8;">0</div>
<div style="left:13px;top:410px;width:7px;height:22px;background:#ffffff;"></div>
<div style="left:13px;top:435px;width:7px;height:24px;background:#0a8a0a;border-radius:2px;"></div>
<svg style="left:13px;top:437px" width="7" height="14"><path d="M1 12L6 2L7 6L2 13Z" fill="#50ff50"/></svg>
<div style="left:13px;top:525px;width:7px;height:4px;background:#ffffff;"></div>
<div style="left:13px;top:529px;width:7px;height:15px;background:#000000;"></div>
<div style="left:13px;top:544px;width:7px;height:4px;background:#ffffff;"></div>
<div style="left:13px;top:550px;width:7px;height:24px;background:#0a8a0a;border-radius:2px;"></div>
<svg style="left:13px;top:552px" width="7" height="14"><path d="M1 12L6 2L7 6L2 13Z" fill="#50ff50"/></svg>
<div style="left:26px;top:619px;width:1045px;height:16px;background:#000000;"></div>
<div style="left:26px;top:635px;width:1045px;height:32px;background:#1c1c1c;"></div>
<div style="left:23px;top:667px;width:1048px;height:3px;background:#ececec;"></div>
<svg style="left:26px;top:619px" width="1045" height="26"><rect x="1.0" y="0" width="1.5" height="25" fill="#d8d8d8"/><rect x="10.5" y="17" width="1.5" height="2" fill="#bbbbbb"/><rect x="20.0" y="17" width="1.5" height="2" fill="#bbbbbb"/><rect x="29.6" y="17" width="1.5" height="2" fill="#bbbbbb"/><rect x="39.1" y="17" width="1.5" height="2" fill="#bbbbbb"/><rect x="48.6" y="0" width="1.5" height="25" fill="#d8d8d8"/><rect x="58.1" y="17" width="1.5" height="2" fill="#bbbbbb"/><rect x="67.6" y="17" width="1.5" height="2" fill="#bbbbbb"/><rect x="77.2" y="17" width="1.5" height="2" fill="#bbbbbb"/><rect x="86.7" y="17" width="1.5" height="2" fill="#bbbbbb"/><rect x="96.2" y="0" width="1.5" height="25" fill="#d8d8d8"/><rect x="105.7" y="17" width="1.5" height="2" fill="#bbbbbb"/><rect x="115.2" y="17" width="1.5" height="2" fill="#bbbbbb"/><rect x="124.8" y="17" width="1.5" height="2" fill="#bbbbbb"/><rect x="134.3" y="17" width="1.5" height="2" fill="#bbbbbb"/><rect x="143.8" y="0" width="1.5" height="25" fill="#d8d8d8"/><rect x="153.3" y="17" width="1.5" height="2" fill="#bbbbbb"/><rect x="162.8" y="17" width="1.5" height="2" fill="#bbbbbb"/><rect x="172.4" y="17" width="1.5" height="2" fill="#bbbbbb"/><rect x="181.9" y="17" width="1.5" height="2" fill="#bbbbbb"/><rect x="191.4" y="0" width="1.5" height="25" fill="#d8d8d8"/><rect x="200.9" y="17" width="1.5" height="2" fill="#bbbbbb"/><rect x="210.4" y="17" width="1.5" height="2" fill="#bbbbbb"/><rect x="220.0" y="17" width="1.5" height="2" fill="#bbbbbb"/><rect x="229.5" y="17" width="1.5" height="2" fill="#bbbbbb"/><rect x="239.0" y="0" width="1.5" height="25" fill="#d8d8d8"/><rect x="248.5" y="17" width="1.5" height="2" fill="#bbbbbb"/><rect x="258.0" y="17" width="1.5" height="2" fill="#bbbbbb"/><rect x="267.6" y="17" width="1.5" height="2" fill="#bbbbbb"/><rect x="277.1" y="17" width="1.5" height="2" fill="#bbbbbb"/><rect x="286.6" y="0" width="1.5" height="25" fill="#d8d8d8"/><rect x="296.1" y="17" width="1.5" height="2" fill="#bbbbbb"/><rect x="305.6" y="17" width="1.5" height="2" fill="#bbbbbb"/><rect x="315.2" y="17" width="1.5" height="2" fill="#bbbbbb"/><rect x="324.7" y="17" width="1.5" height="2" fill="#bbbbbb"/><rect x="334.2" y="0" width="1.5" height="25" fill="#d8d8d8"/><rect x="343.7" y="17" width="1.5" height="2" fill="#bbbbbb"/><rect x="353.2" y="17" width="1.5" height="2" fill="#bbbbbb"/><rect x="362.8" y="17" width="1.5" height="2" fill="#bbbbbb"/><rect x="372.3" y="17" width="1.5" height="2" fill="#bbbbbb"/><rect x="381.8" y="0" width="1.5" height="25" fill="#d8d8d8"/><rect x="391.3" y="17" width="1.5" height="2" fill="#bbbbbb"/><rect x="400.8" y="17" width="1.5" height="2" fill="#bbbbbb"/><rect x="410.4" y="17" width="1.5" height="2" fill="#bbbbbb"/><rect x="419.9" y="17" width="1.5" height="2" fill="#bbbbbb"/><rect x="429.4" y="0" width="1.5" height="25" fill="#d8d8d8"/><rect x="438.9" y="17" width="1.5" height="2" fill="#bbbbbb"/><rect x="448.4" y="17" width="1.5" height="2" fill="#bbbbbb"/><rect x="458.0" y="17" width="1.5" height="2" fill="#bbbbbb"/><rect x="467.5" y="17" width="1.5" height="2" fill="#bbbbbb"/><rect x="477.0" y="0" width="1.5" height="25" fill="#d8d8d8"/><rect x="486.5" y="17" width="1.5" height="2" fill="#bbbbbb"/><rect x="496.0" y="17" width="1.5" height="2" fill="#bbbbbb"/><rect x="505.6" y="17" width="1.5" height="2" fill="#bbbbbb"/><rect x="515.1" y="17" width="1.5" height="2" fill="#bbbbbb"/><rect x="524.6" y="0" width="1.5" height="25" fill="#d8d8d8"/><rect x="534.1" y="17" width="1.5" height="2" fill="#bbbbbb"/><rect x="543.6" y="17" width="1.5" height="2" fill="#bbbbbb"/><rect x="553.2" y="17" width="1.5" height="2" fill="#bbbbbb"/><rect x="562.7" y="17" width="1.5" height="2" fill="#bbbbbb"/><rect x="572.2" y="0" width="1.5" height="25" fill="#d8d8d8"/><rect x="581.7" y="17" width="1.5" height="2" fill="#bbbbbb"/><rect x="591.2" y="17" width="1.5" height="2" fill="#bbbbbb"/><rect x="600.8" y="17" width="1.5" height="2" fill="#bbbbbb"/><rect x="610.3" y="17" width="1.5" height="2" fill="#bbbbbb"/><rect x="619.8" y="0" width="1.5" height="25" fill="#d8d8d8"/><rect x="629.3" y="17" width="1.5" height="2" fill="#bbbbbb"/><rect x="638.8" y="17" width="1.5" height="2" fill="#bbbbbb"/><rect x="648.4" y="17" width="1.5" height="2" fill="#bbbbbb"/><rect x="657.9" y="17" width="1.5" height="2" fill="#bbbbbb"/><rect x="667.4" y="0" width="1.5" height="25" fill="#d8d8d8"/><rect x="676.9" y="17" width="1.5" height="2" fill="#bbbbbb"/><rect x="686.4" y="17" width="1.5" height="2" fill="#bbbbbb"/><rect x="696.0" y="17" width="1.5" height="2" fill="#bbbbbb"/><rect x="705.5" y="17" width="1.5" height="2" fill="#bbbbbb"/><rect x="715.0" y="0" width="1.5" height="25" fill="#d8d8d8"/><rect x="724.5" y="17" width="1.5" height="2" fill="#bbbbbb"/><rect x="734.0" y="17" width="1.5" height="2" fill="#bbbbbb"/><rect x="743.6" y="17" width="1.5" height="2" fill="#bbbbbb"/><rect x="753.1" y="17" width="1.5" height="2" fill="#bbbbbb"/><rect x="762.6" y="0" width="1.5" height="25" fill="#d8d8d8"/><rect x="772.1" y="17" width="1.5" height="2" fill="#bbbbbb"/><rect x="781.6" y="17" width="1.5" height="2" fill="#bbbbbb"/><rect x="791.2" y="17" width="1.5" height="2" fill="#bbbbbb"/><rect x="800.7" y="17" width="1.5" height="2" fill="#bbbbbb"/><rect x="810.2" y="0" width="1.5" height="25" fill="#d8d8d8"/><rect x="819.7" y="17" width="1.5" height="2" fill="#bbbbbb"/><rect x="829.2" y="17" width="1.5" height="2" fill="#bbbbbb"/><rect x="838.8" y="17" width="1.5" height="2" fill="#bbbbbb"/><rect x="848.3" y="17" width="1.5" height="2" fill="#bbbbbb"/><rect x="857.8" y="0" width="1.5" height="25" fill="#d8d8d8"/><rect x="867.3" y="17" width="1.5" height="2" fill="#bbbbbb"/><rect x="876.8" y="17" width="1.5" height="2" fill="#bbbbbb"/><rect x="886.4" y="17" width="1.5" height="2" fill="#bbbbbb"/><rect x="895.9" y="17" width="1.5" height="2" fill="#bbbbbb"/><rect x="905.4" y="0" width="1.5" height="25" fill="#d8d8d8"/><rect x="914.9" y="17" width="1.5" height="2" fill="#bbbbbb"/><rect x="924.4" y="17" width="1.5" height="2" fill="#bbbbbb"/><rect x="934.0" y="17" width="1.5" height="2" fill="#bbbbbb"/><rect x="943.5" y="17" width="1.5" height="2" fill="#bbbbbb"/><rect x="953.0" y="0" width="1.5" height="25" fill="#d8d8d8"/><rect x="962.5" y="17" width="1.5" height="2" fill="#bbbbbb"/><rect x="972.0" y="17" width="1.5" height="2" fill="#bbbbbb"/><rect x="981.6" y="17" width="1.5" height="2" fill="#bbbbbb"/><rect x="991.1" y="17" width="1.5" height="2" fill="#bbbbbb"/><rect x="1000.6" y="0" width="1.5" height="25" fill="#d8d8d8"/><rect x="1010.1" y="17" width="1.5" height="2" fill="#bbbbbb"/><rect x="1019.6" y="17" width="1.5" height="2" fill="#bbbbbb"/><rect x="1029.2" y="17" width="1.5" height="2" fill="#bbbbbb"/><rect x="1038.7" y="17" width="1.5" height="2" fill="#bbbbbb"/></svg>
<div class="t " style="left:30px;top:641px;font-size:21px;color:#c8c8c8;letter-spacing:0.3px;">0:00</div>
<div class="t " style="left:125px;top:641px;font-size:21px;color:#c8c8c8;letter-spacing:0.3px;">0:20</div>
<div class="t " style="left:220px;top:641px;font-size:21px;color:#c8c8c8;letter-spacing:0.3px;">0:40</div>
<div class="t " style="left:316px;top:641px;font-size:21px;color:#c8c8c8;letter-spacing:0.3px;">1:00</div>
<div class="t " style="left:411px;top:641px;font-size:21px;color:#c8c8c8;letter-spacing:0.3px;">1:20</div>
<div class="t " style="left:506px;top:641px;font-size:21px;color:#c8c8c8;letter-spacing:0.3px;">1:40</div>
<div class="t " style="left:601px;top:641px;font-size:21px;color:#c8c8c8;letter-spacing:0.3px;">2:00</div>
<div class="t " style="left:696px;top:641px;font-size:21px;color:#c8c8c8;letter-spacing:0.3px;">2:20</div>
<div class="t " style="left:792px;top:641px;font-size:21px;color:#c8c8c8;letter-spacing:0.3px;">2:40</div>
<div class="t " style="left:887px;top:641px;font-size:21px;color:#c8c8c8;letter-spacing:0.3px;">3:00</div>
<div class="t " style="left:982px;top:641px;font-size:21px;color:#c8c8c8;letter-spacing:0.3px;">3:20</div>
<div style="left:23px;top:676px;width:1048px;height:2px;background:#8a8a8a;"></div>
<div style="left:23px;top:676px;width:3px;height:101px;background:#8a8a8a;"></div>
<div style="left:26px;top:678px;width:1045px;height:71px;background:#1e1c9e;"></div>
<div style="left:26px;top:678px;width:30px;height:71px;background:linear-gradient(90deg,#7a7ac8 0%,#6a6ac0 40%,#3a38b0 70%,#1e1c9e 100%)"></div>
<div style="left:26px;top:678px;width:5px;height:71px;background:#2aa8f0;"></div>
<svg style="left:26px;top:678px" width="1045" height="71"><rect x="48.6" y="0" width="1.5" height="71" fill="#8c8c8c"/><rect x="96.2" y="0" width="1.5" height="71" fill="#8c8c8c"/><rect x="143.8" y="0" width="1.5" height="71" fill="#8c8c8c"/><rect x="191.4" y="0" width="1.5" height="71" fill="#8c8c8c"/><rect x="239.0" y="0" width="1.5" height="71" fill="#8c8c8c"/><rect x="286.6" y="0" width="1.5" height="71" fill="#8c8c8c"/><rect x="334.2" y="0" width="1.5" height="71" fill="#8c8c8c"/><rect x="381.8" y="0" width="1.5" height="71" fill="#8c8c8c"/><rect x="429.4" y="0" width="1.5" height="71" fill="#8c8c8c"/><rect x="477.0" y="0" width="1.5" height="71" fill="#8c8c8c"/><rect x="524.6" y="0" width="1.5" height="71" fill="#8c8c8c"/><rect x="572.2" y="0" width="1.5" height="71" fill="#8c8c8c"/><rect x="619.8" y="0" width="1.5" height="71" fill="#8c8c8c"/><rect x="667.4" y="0" width="1.5" height="71" fill="#8c8c8c"/><rect x="715.0" y="0" width="1.5" height="71" fill="#8c8c8c"/><rect x="762.6" y="0" width="1.5" height="71" fill="#8c8c8c"/><rect x="810.2" y="0" width="1.5" height="71" fill="#8c8c8c"/><rect x="857.8" y="0" width="1.5" height="71" fill="#8c8c8c"/><rect x="905.4" y="0" width="1.5" height="71" fill="#8c8c8c"/><rect x="953.0" y="0" width="1.5" height="71" fill="#8c8c8c"/><rect x="1000.6" y="0" width="1.5" height="71" fill="#8c8c8c"/><rect x="0" y="35" width="1045" height="1.2" fill="#6a6a6a"/><path fill="#ffffff" d="M0 16h1v2h-1zM1 16h1v2h-1zM6 16h1v2h-1zM7 16h1v2h-1zM8 16h1v2h-1zM9 16h1v2h-1zM10 16h1v2h-1zM11 16h1v2h-1zM12 16h1v2h-1zM13 16h1v2h-1zM14 16h1v2h-1zM15 16h1v2h-1zM16 16h1v2h-1zM17 16h1v2h-1zM18 16h1v2h-1zM19 16h1v2h-1zM20 16h1v2h-1zM21 16h1v2h-1zM22 15h1v4h-1zM23 14h1v5h-1zM24 15h1v4h-1zM25 13h1v8h-1zM26 14h1v6h-1zM27 14h1v6h-1zM28 14h1v6h-1zM29 13h1v8h-1zM30 10h1v14h-1zM31 13h1v8h-1zM32 12h1v10h-1zM33 12h1v11h-1zM34 12h1v10h-1zM35 9h1v16h-1zM36 12h1v10h-1zM37 12h1v11h-1zM38 7h1v20h-1zM39 12h1v10h-1zM40 12h1v10h-1zM41 12h1v9h-1zM42 10h1v14h-1zM43 12h1v11h-1zM44 7h1v20h-1zM45 8h1v18h-1zM46 11h1v11h-1zM47 13h1v8h-1zM48 12h1v10h-1zM49 12h1v11h-1zM50 13h1v9h-1zM51 12h1v10h-1zM52 12h1v10h-1zM53 11h1v11h-1zM54 9h1v16h-1zM55 10h1v14h-1zM56 12h1v10h-1zM57 13h1v8h-1zM58 13h1v8h-1zM59 11h1v11h-1zM60 11h1v12h-1zM61 13h1v8h-1zM62 12h1v9h-1zM63 13h1v8h-1zM64 10h1v14h-1zM65 8h1v18h-1zM66 13h1v8h-1zM67 13h1v8h-1zM68 13h1v8h-1zM69 13h1v8h-1zM70 10h1v14h-1zM71 13h1v8h-1zM72 14h1v6h-1zM73 10h1v14h-1zM74 10h1v14h-1zM75 13h1v8h-1zM76 13h1v8h-1zM77 13h1v8h-1zM78 13h1v8h-1zM79 13h1v8h-1zM80 14h1v6h-1zM81 11h1v11h-1zM82 11h1v12h-1zM83 12h1v10h-1zM84 12h1v10h-1zM85 13h1v8h-1zM86 10h1v14h-1zM87 13h1v8h-1zM88 13h1v8h-1zM89 13h1v8h-1zM90 9h1v15h-1zM91 13h1v8h-1zM92 12h1v10h-1zM93 13h1v8h-1zM94 10h1v14h-1zM95 14h1v6h-1zM96 13h1v8h-1zM97 10h1v14h-1zM98 14h1v6h-1zM99 14h1v6h-1zM100 13h1v8h-1zM101 13h1v8h-1zM102 11h1v12h-1zM103 14h1v6h-1zM104 14h1v6h-1zM105 11h1v12h-1zM106 13h1v8h-1zM107 10h1v14h-1zM108 13h1v8h-1zM109 14h1v6h-1zM110 12h1v10h-1zM111 8h1v18h-1zM112 8h1v18h-1zM113 3h1v27h-1zM114 0h1v34h-1zM115 0h1v34h-1zM116 2h1v30h-1zM117 0h1v34h-1zM118 0h1v34h-1zM119 0h1v34h-1zM120 0h1v34h-1zM121 0h1v34h-1zM122 8h1v18h-1zM123 0h1v33h-1zM124 0h1v34h-1zM125 0h1v34h-1zM126 11h1v12h-1zM127 0h1v34h-1zM128 0h1v34h-1zM129 1h1v32h-1zM130 4h1v26h-1zM131 0h1v34h-1zM132 0h1v34h-1zM133 0h1v34h-1zM134 0h1v34h-1zM135 0h1v34h-1zM136 0h1v34h-1zM137 5h1v24h-1zM138 0h1v34h-1zM139 0h1v34h-1zM140 0h1v34h-1zM141 0h1v34h-1zM142 0h1v34h-1zM143 0h1v34h-1zM144 0h1v34h-1zM145 0h1v34h-1zM146 1h1v32h-1zM147 0h1v34h-1zM148 10h1v14h-1zM149 10h1v14h-1zM150 3h1v27h-1zM151 3h1v28h-1zM152 7h1v20h-1zM153 6h1v22h-1zM154 10h1v14h-1zM155 2h1v30h-1zM156 2h1v29h-1zM157 1h1v32h-1zM158 0h1v34h-1zM159 1h1v32h-1zM160 0h1v34h-1zM161 2h1v30h-1zM162 0h1v34h-1zM163 0h1v34h-1zM164 0h1v34h-1zM165 0h1v34h-1zM166 0h1v34h-1zM167 0h1v34h-1zM168 4h1v26h-1zM169 8h1v18h-1zM170 3h1v28h-1zM171 0h1v34h-1zM172 0h1v34h-1zM173 8h1v18h-1zM174 0h1v34h-1zM175 2h1v30h-1zM176 1h1v32h-1zM177 0h1v34h-1zM178 0h1v34h-1zM179 4h1v26h-1zM180 7h1v20h-1zM181 0h1v34h-1zM182 0h1v34h-1zM183 0h1v34h-1zM184 0h1v34h-1zM185 2h1v30h-1zM186 1h1v32h-1zM187 2h1v30h-1zM188 3h1v29h-1zM189 1h1v32h-1zM190 11h1v12h-1zM191 5h1v24h-1zM192 5h1v24h-1zM193 2h1v30h-1zM194 2h1v29h-1zM195 1h1v32h-1zM196 5h1v23h-1zM197 0h1v34h-1zM198 1h1v32h-1zM199 1h1v32h-1zM200 4h1v26h-1zM201 6h1v22h-1zM202 6h1v23h-1zM203 0h1v34h-1zM204 0h1v34h-1zM205 0h1v34h-1zM206 0h1v34h-1zM207 4h1v26h-1zM208 0h1v34h-1zM209 0h1v34h-1zM210 8h1v18h-1zM211 2h1v30h-1zM212 0h1v34h-1zM213 0h1v34h-1zM214 0h1v34h-1zM215 0h1v34h-1zM216 9h1v16h-1zM217 9h1v16h-1zM218 10h1v15h-1zM219 0h1v34h-1zM220 0h1v34h-1zM221 0h1v34h-1zM222 0h1v34h-1zM223 0h1v34h-1zM224 0h1v34h-1zM225 0h1v34h-1zM226 12h1v10h-1zM227 0h1v34h-1zM228 0h1v34h-1zM229 0h1v34h-1zM230 0h1v34h-1zM231 0h1v34h-1zM232 0h1v34h-1zM233 7h1v20h-1zM234 5h1v24h-1zM235 0h1v34h-1zM236 12h1v10h-1zM237 12h1v10h-1zM238 0h1v34h-1zM239 0h1v34h-1zM240 0h1v34h-1zM241 1h1v32h-1zM242 11h1v12h-1zM243 1h1v33h-1zM244 5h1v24h-1zM245 8h1v18h-1zM246 9h1v16h-1zM247 3h1v29h-1zM248 0h1v34h-1zM249 2h1v30h-1zM250 3h1v28h-1zM251 10h1v14h-1zM252 9h1v16h-1zM253 0h1v34h-1zM254 0h1v34h-1zM255 9h1v15h-1zM256 0h1v34h-1zM257 0h1v34h-1zM258 0h1v34h-1zM259 0h1v34h-1zM260 3h1v28h-1zM261 9h1v16h-1zM262 0h1v34h-1zM263 0h1v34h-1zM264 0h1v34h-1zM265 0h1v34h-1zM266 0h1v34h-1zM267 0h1v34h-1zM268 0h1v34h-1zM269 0h1v34h-1zM270 0h1v34h-1zM271 0h1v34h-1zM272 3h1v28h-1zM273 0h1v34h-1zM274 1h1v31h-1zM275 0h1v34h-1zM276 0h1v34h-1zM277 0h1v34h-1zM278 0h1v34h-1zM279 0h1v34h-1zM280 0h1v34h-1zM281 0h1v34h-1zM282 0h1v34h-1zM283 0h1v34h-1zM284 5h1v25h-1zM285 5h1v24h-1zM286 0h1v34h-1zM287 2h1v30h-1zM288 2h1v30h-1zM289 1h1v32h-1zM290 0h1v34h-1zM291 0h1v34h-1zM292 0h1v34h-1zM293 0h1v34h-1zM294 0h1v34h-1zM295 0h1v34h-1zM296 3h1v27h-1zM297 0h1v34h-1zM298 0h1v34h-1zM299 0h1v34h-1zM300 1h1v32h-1zM301 11h1v12h-1zM302 0h1v34h-1zM303 0h1v34h-1zM304 0h1v34h-1zM305 0h1v34h-1zM306 0h1v34h-1zM307 0h1v34h-1zM308 0h1v34h-1zM309 0h1v34h-1zM310 0h1v34h-1zM311 1h1v32h-1zM312 7h1v20h-1zM313 3h1v28h-1zM314 6h1v22h-1zM315 5h1v24h-1zM316 13h1v8h-1zM317 12h1v10h-1zM318 0h1v34h-1zM319 11h1v12h-1zM320 0h1v34h-1zM321 6h1v22h-1zM322 7h1v20h-1zM323 0h1v34h-1zM324 12h1v10h-1zM325 0h1v34h-1zM326 0h1v34h-1zM327 0h1v34h-1zM328 0h1v34h-1zM329 12h1v10h-1zM330 12h1v10h-1zM331 3h1v28h-1zM332 0h1v34h-1zM333 0h1v34h-1zM334 0h1v34h-1zM335 0h1v34h-1zM336 1h1v32h-1zM337 1h1v32h-1zM338 0h1v34h-1zM339 0h1v34h-1zM340 0h1v34h-1zM341 7h1v20h-1zM342 0h1v34h-1zM343 9h1v16h-1zM344 9h1v15h-1zM345 7h1v20h-1zM346 8h1v18h-1zM347 0h1v34h-1zM348 0h1v34h-1zM349 0h1v34h-1zM350 0h1v34h-1zM351 4h1v26h-1zM352 0h1v34h-1zM353 0h1v34h-1zM354 0h1v34h-1zM355 1h1v32h-1zM356 0h1v34h-1zM357 0h1v34h-1zM358 0h1v34h-1zM359 6h1v22h-1zM360 0h1v34h-1zM361 0h1v34h-1zM362 3h1v28h-1zM363 0h1v34h-1zM364 0h1v34h-1zM365 0h1v34h-1zM366 11h1v12h-1zM367 11h1v12h-1zM368 0h1v34h-1zM369 0h1v34h-1zM370 0h1v34h-1zM371 10h1v14h-1zM372 0h1v34h-1zM373 0h1v34h-1zM374 8h1v19h-1zM375 7h1v21h-1zM376 12h1v10h-1zM377 0h1v34h-1zM378 11h1v12h-1zM379 0h1v34h-1zM380 8h1v18h-1zM381 7h1v20h-1zM382 0h1v34h-1zM383 0h1v34h-1zM384 2h1v31h-1zM385 2h1v30h-1zM386 3h1v28h-1zM387 6h1v22h-1zM388 5h1v25h-1zM389 5h1v24h-1zM390 7h1v20h-1zM391 1h1v32h-1zM392 1h1v32h-1zM393 7h1v20h-1zM394 6h1v23h-1zM395 4h1v26h-1zM396 0h1v34h-1zM397 3h1v27h-1zM398 0h1v34h-1zM399 0h1v34h-1zM400 0h1v34h-1zM401 0h1v34h-1zM402 0h1v34h-1zM403 1h1v31h-1zM404 0h1v34h-1zM405 5h1v24h-1zM406 6h1v22h-1zM407 5h1v24h-1zM408 8h1v18h-1zM409 9h1v16h-1zM410 0h1v34h-1zM411 0h1v34h-1zM412 0h1v34h-1zM413 2h1v31h-1zM414 2h1v29h-1zM415 6h1v22h-1zM416 7h1v20h-1zM417 0h1v34h-1zM418 0h1v34h-1zM419 0h1v34h-1zM420 0h1v34h-1zM421 0h1v34h-1zM422 1h1v33h-1zM423 4h1v26h-1zM424 0h1v34h-1zM425 0h1v34h-1zM426 0h1v34h-1zM427 0h1v34h-1zM428 1h1v31h-1zM429 0h1v34h-1zM430 0h1v34h-1zM431 0h1v34h-1zM432 0h1v34h-1zM433 3h1v28h-1zM434 0h1v34h-1zM435 0h1v34h-1zM436 4h1v25h-1zM437 0h1v34h-1zM438 12h1v10h-1zM439 0h1v34h-1zM440 0h1v34h-1zM441 0h1v34h-1zM442 0h1v34h-1zM443 0h1v34h-1zM444 0h1v34h-1zM445 0h1v34h-1zM446 2h1v29h-1zM447 1h1v32h-1zM448 0h1v34h-1zM449 0h1v34h-1zM450 0h1v34h-1zM451 0h1v34h-1zM452 8h1v18h-1zM453 8h1v17h-1zM454 0h1v34h-1zM455 0h1v34h-1zM456 0h1v34h-1zM457 0h1v34h-1zM458 1h1v33h-1zM459 0h1v34h-1zM460 5h1v24h-1zM461 9h1v16h-1zM462 0h1v34h-1zM463 0h1v34h-1zM464 13h1v8h-1zM465 0h1v34h-1zM466 0h1v34h-1zM467 0h1v34h-1zM468 0h1v34h-1zM469 0h1v34h-1zM470 0h1v34h-1zM471 1h1v33h-1zM472 0h1v34h-1zM473 0h1v34h-1zM474 0h1v34h-1zM475 0h1v34h-1zM476 0h1v34h-1zM477 7h1v21h-1zM478 4h1v26h-1zM479 0h1v34h-1zM480 0h1v34h-1zM481 3h1v29h-1zM482 6h1v21h-1zM483 0h1v34h-1zM484 0h1v34h-1zM485 0h1v34h-1zM486 0h1v34h-1zM487 0h1v34h-1zM488 0h1v34h-1zM489 1h1v32h-1zM490 0h1v34h-1zM491 0h1v34h-1zM492 7h1v20h-1zM493 0h1v34h-1zM494 0h1v34h-1zM495 4h1v27h-1zM496 0h1v34h-1zM497 0h1v34h-1zM498 0h1v34h-1zM499 0h1v34h-1zM500 4h1v26h-1zM501 6h1v23h-1zM502 4h1v26h-1zM503 4h1v26h-1zM504 14h1v6h-1zM505 3h1v27h-1zM506 3h1v28h-1zM507 4h1v26h-1zM508 10h1v14h-1zM509 6h1v22h-1zM510 7h1v20h-1zM511 1h1v32h-1zM512 3h1v28h-1zM513 13h1v8h-1zM514 3h1v28h-1zM515 0h1v34h-1zM516 0h1v34h-1zM517 5h1v24h-1zM518 1h1v33h-1zM519 9h1v15h-1zM520 0h1v34h-1zM521 0h1v34h-1zM522 0h1v34h-1zM523 0h1v34h-1zM524 4h1v26h-1zM525 0h1v34h-1zM526 0h1v33h-1zM527 12h1v10h-1zM528 4h1v27h-1zM529 2h1v30h-1zM530 1h1v32h-1zM531 0h1v34h-1zM532 0h1v34h-1zM533 0h1v34h-1zM534 0h1v34h-1zM535 10h1v14h-1zM536 11h1v12h-1zM537 3h1v28h-1zM538 2h1v30h-1zM539 13h1v8h-1zM540 0h1v34h-1zM541 12h1v10h-1zM542 12h1v10h-1zM543 12h1v10h-1zM544 8h1v18h-1zM545 7h1v20h-1zM546 0h1v34h-1zM547 0h1v34h-1zM548 0h1v34h-1zM549 0h1v34h-1zM550 0h1v34h-1zM551 0h1v34h-1zM552 2h1v30h-1zM553 0h1v34h-1zM554 0h1v34h-1zM555 0h1v34h-1zM556 3h1v28h-1zM557 3h1v27h-1zM558 0h1v34h-1zM559 0h1v34h-1zM560 4h1v26h-1zM561 2h1v29h-1zM562 0h1v34h-1zM563 0h1v34h-1zM564 0h1v34h-1zM565 0h1v34h-1zM566 4h1v26h-1zM567 2h1v29h-1zM568 6h1v22h-1zM569 6h1v22h-1zM570 12h1v10h-1zM571 0h1v34h-1zM572 0h1v34h-1zM573 0h1v34h-1zM574 0h1v34h-1zM575 0h1v34h-1zM576 0h1v34h-1zM577 0h1v34h-1zM578 0h1v34h-1zM579 0h1v34h-1zM580 0h1v34h-1zM581 12h1v11h-1zM582 0h1v34h-1zM583 0h1v34h-1zM584 0h1v34h-1zM585 0h1v34h-1zM586 0h1v34h-1zM587 0h1v34h-1zM588 9h1v16h-1zM589 3h1v28h-1zM590 1h1v31h-1zM591 0h1v34h-1zM592 12h1v11h-1zM593 0h1v34h-1zM594 0h1v34h-1zM595 0h1v34h-1zM596 6h1v22h-1zM597 5h1v24h-1zM598 0h1v34h-1zM599 0h1v34h-1zM600 0h1v34h-1zM601 0h1v34h-1zM602 0h1v34h-1zM603 0h1v34h-1zM604 0h1v34h-1zM605 7h1v19h-1zM606 7h1v20h-1zM607 3h1v28h-1zM608 10h1v14h-1zM609 13h1v8h-1zM610 0h1v34h-1zM611 0h1v34h-1zM612 12h1v10h-1zM613 11h1v12h-1zM614 0h1v34h-1zM615 0h1v34h-1zM616 0h1v34h-1zM617 0h1v34h-1zM618 4h1v26h-1zM619 0h1v34h-1zM620 0h1v34h-1zM621 0h1v34h-1zM622 1h1v32h-1zM623 0h1v34h-1zM624 0h1v34h-1zM625 0h1v34h-1zM626 0h1v34h-1zM627 0h1v34h-1zM628 0h1v34h-1zM629 2h1v30h-1zM630 0h1v34h-1zM631 0h1v34h-1zM632 0h1v34h-1zM633 0h1v34h-1zM634 0h1v34h-1zM635 0h1v34h-1zM636 0h1v34h-1zM637 0h1v34h-1zM638 11h1v12h-1zM639 6h1v21h-1zM640 0h1v34h-1zM641 0h1v34h-1zM642 0h1v34h-1zM643 1h1v32h-1zM644 0h1v34h-1zM645 3h1v28h-1zM646 1h1v33h-1zM647 10h1v14h-1zM648 11h1v12h-1zM649 5h1v24h-1zM650 7h1v20h-1zM651 13h1v7h-1zM652 14h1v6h-1zM653 4h1v26h-1zM654 0h1v34h-1zM655 0h1v34h-1zM656 0h1v34h-1zM657 0h1v34h-1zM658 9h1v15h-1zM659 0h1v34h-1zM660 2h1v31h-1zM661 0h1v34h-1zM662 0h1v34h-1zM663 0h1v34h-1zM664 5h1v24h-1zM665 6h1v23h-1zM666 0h1v34h-1zM667 0h1v34h-1zM668 0h1v34h-1zM669 0h1v34h-1zM670 3h1v28h-1zM671 7h1v21h-1zM672 5h1v24h-1zM673 4h1v26h-1zM674 1h1v33h-1zM675 2h1v30h-1zM676 0h1v34h-1zM677 0h1v34h-1zM678 9h1v17h-1zM679 0h1v34h-1zM680 0h1v34h-1zM681 0h1v34h-1zM682 0h1v34h-1zM683 0h1v34h-1zM684 0h1v34h-1zM685 8h1v18h-1zM686 8h1v19h-1zM687 0h1v34h-1zM688 0h1v34h-1zM689 7h1v20h-1zM690 0h1v34h-1zM691 0h1v34h-1zM692 0h1v34h-1zM693 0h1v34h-1zM694 2h1v31h-1zM695 9h1v16h-1zM696 0h1v34h-1zM697 1h1v32h-1zM698 2h1v30h-1zM699 0h1v34h-1zM700 0h1v34h-1zM701 0h1v34h-1zM702 3h1v28h-1zM703 1h1v31h-1zM704 0h1v34h-1zM705 0h1v34h-1zM706 0h1v34h-1zM707 0h1v34h-1zM708 12h1v10h-1zM709 11h1v12h-1zM710 0h1v34h-1zM711 0h1v34h-1zM712 0h1v34h-1zM713 0h1v34h-1zM714 1h1v32h-1zM715 1h1v32h-1zM716 3h1v28h-1zM717 0h1v34h-1zM718 3h1v28h-1zM719 0h1v34h-1zM720 6h1v23h-1zM721 3h1v28h-1zM722 0h1v34h-1zM723 0h1v34h-1zM724 10h1v14h-1zM725 3h1v29h-1zM726 10h1v13h-1zM727 10h1v14h-1zM728 0h1v34h-1zM729 0h1v34h-1zM730 0h1v34h-1zM731 0h1v34h-1zM732 0h1v34h-1zM733 4h1v26h-1zM734 4h1v26h-1zM735 0h1v34h-1zM736 12h1v10h-1zM737 0h1v34h-1zM738 0h1v34h-1zM739 0h1v34h-1zM740 0h1v34h-1zM741 0h1v34h-1zM742 1h1v32h-1zM743 0h1v34h-1zM744 0h1v34h-1zM745 0h1v34h-1zM746 8h1v18h-1zM747 9h1v16h-1zM748 0h1v34h-1zM749 2h1v30h-1zM750 2h1v30h-1zM751 0h1v34h-1zM752 0h1v34h-1zM753 6h1v22h-1zM754 6h1v22h-1zM755 1h1v32h-1zM756 0h1v34h-1zM757 0h1v34h-1zM758 0h1v34h-1zM759 2h1v30h-1zM760 0h1v34h-1zM761 0h1v34h-1zM762 0h1v34h-1zM763 0h1v34h-1zM764 2h1v30h-1zM765 3h1v28h-1zM766 0h1v34h-1zM767 0h1v34h-1zM768 8h1v18h-1zM769 4h1v26h-1zM770 8h1v18h-1zM771 10h1v15h-1zM772 11h1v12h-1zM773 11h1v12h-1zM774 10h1v14h-1zM775 12h1v10h-1zM776 11h1v13h-1zM777 11h1v12h-1zM778 11h1v13h-1zM779 7h1v20h-1zM780 7h1v21h-1zM781 6h1v23h-1zM782 11h1v12h-1zM783 11h1v13h-1zM784 10h1v13h-1zM785 12h1v11h-1zM786 11h1v12h-1zM787 11h1v12h-1zM788 10h1v13h-1zM789 12h1v11h-1zM790 11h1v11h-1zM791 11h1v12h-1zM792 10h1v14h-1zM793 8h1v17h-1zM794 7h1v20h-1zM795 9h1v16h-1zM796 10h1v14h-1zM797 8h1v18h-1zM798 12h1v10h-1zM799 12h1v10h-1zM800 12h1v10h-1zM801 11h1v12h-1zM802 8h1v17h-1zM803 7h1v20h-1zM804 12h1v10h-1zM805 11h1v12h-1zM806 6h1v22h-1zM807 7h1v21h-1zM808 10h1v14h-1zM809 12h1v10h-1zM810 7h1v20h-1zM811 7h1v20h-1zM812 8h1v19h-1zM813 11h1v12h-1zM814 12h1v11h-1zM815 12h1v10h-1zM816 8h1v18h-1zM817 6h1v21h-1zM818 8h1v18h-1zM819 10h1v14h-1zM820 8h1v18h-1zM821 11h1v12h-1zM822 10h1v14h-1zM823 11h1v12h-1zM824 6h1v22h-1zM825 8h1v19h-1zM826 7h1v20h-1zM827 10h1v14h-1zM828 11h1v12h-1zM829 11h1v12h-1zM830 10h1v14h-1zM831 12h1v11h-1zM832 5h1v24h-1zM833 7h1v20h-1zM834 11h1v11h-1zM835 7h1v21h-1zM836 11h1v13h-1zM837 7h1v21h-1zM838 5h1v23h-1zM839 10h1v14h-1zM840 11h1v11h-1zM841 9h1v16h-1zM842 11h1v12h-1zM843 6h1v23h-1zM844 6h1v22h-1zM845 8h1v18h-1zM846 11h1v12h-1zM847 10h1v14h-1zM848 11h1v12h-1zM849 12h1v10h-1zM850 9h1v16h-1zM851 3h1v29h-1zM852 2h1v29h-1zM853 6h1v21h-1zM854 6h1v22h-1zM855 0h1v34h-1zM856 0h1v34h-1zM857 0h1v34h-1zM858 0h1v34h-1zM859 0h1v34h-1zM860 0h1v34h-1zM861 1h1v32h-1zM862 0h1v34h-1zM863 0h1v34h-1zM864 1h1v32h-1zM865 0h1v34h-1zM866 12h1v10h-1zM867 0h1v34h-1zM868 0h1v34h-1zM869 0h1v34h-1zM870 0h1v34h-1zM871 0h1v34h-1zM872 0h1v34h-1zM873 0h1v34h-1zM874 0h1v34h-1zM875 0h1v34h-1zM876 0h1v34h-1zM877 0h1v34h-1zM878 0h1v34h-1zM879 0h1v34h-1zM880 3h1v28h-1zM881 3h1v28h-1zM882 0h1v34h-1zM883 0h1v34h-1zM884 0h1v34h-1zM885 11h1v12h-1zM886 0h1v34h-1zM887 6h1v22h-1zM888 7h1v20h-1zM889 5h1v24h-1zM890 6h1v22h-1zM891 0h1v34h-1zM892 0h1v34h-1zM893 0h1v34h-1zM894 0h1v34h-1zM895 0h1v34h-1zM896 0h1v34h-1zM897 0h1v34h-1zM898 0h1v34h-1zM899 0h1v34h-1zM900 0h1v34h-1zM901 9h1v16h-1zM902 5h1v25h-1zM903 4h1v26h-1zM904 3h1v28h-1zM905 0h1v34h-1zM906 2h1v30h-1zM907 0h1v34h-1zM908 0h1v34h-1zM909 0h1v34h-1zM910 0h1v34h-1zM911 10h1v14h-1zM912 0h1v34h-1zM913 0h1v34h-1zM914 0h1v34h-1zM915 5h1v24h-1zM916 6h1v22h-1zM917 7h1v21h-1zM918 12h1v10h-1zM919 3h1v27h-1zM920 0h1v34h-1zM921 0h1v34h-1zM922 4h1v25h-1zM923 11h1v12h-1zM924 0h1v34h-1zM925 1h1v31h-1zM926 0h1v34h-1zM927 3h1v28h-1zM928 4h1v26h-1zM929 0h1v34h-1zM930 0h1v34h-1zM931 7h1v21h-1zM932 12h1v10h-1zM933 10h1v14h-1zM934 11h1v12h-1zM935 0h1v34h-1zM936 0h1v34h-1zM937 0h1v34h-1zM938 0h1v34h-1zM939 0h1v34h-1zM940 0h1v34h-1zM941 0h1v34h-1zM942 0h1v34h-1zM943 8h1v18h-1zM944 0h1v34h-1zM945 0h1v34h-1zM946 0h1v34h-1zM947 0h1v34h-1zM948 11h1v12h-1zM949 2h1v30h-1zM950 0h1v34h-1zM951 0h1v34h-1zM952 0h1v34h-1zM953 0h1v34h-1zM954 11h1v12h-1zM955 2h1v30h-1zM956 0h1v34h-1zM957 0h1v33h-1zM958 2h1v30h-1zM959 2h1v30h-1zM960 2h1v30h-1zM961 8h1v18h-1zM962 11h1v12h-1zM963 0h1v33h-1zM964 0h1v34h-1zM965 0h1v34h-1zM966 0h1v34h-1zM967 0h1v34h-1zM968 9h1v17h-1zM969 0h1v34h-1zM970 9h1v16h-1zM971 0h1v34h-1zM972 0h1v34h-1zM973 0h1v34h-1zM974 0h1v34h-1zM975 11h1v12h-1zM976 11h1v12h-1zM977 0h1v34h-1zM978 3h1v28h-1zM979 3h1v27h-1zM980 0h1v33h-1zM981 0h1v34h-1zM982 2h1v30h-1zM983 0h1v34h-1zM984 0h1v34h-1zM985 0h1v34h-1zM986 0h1v34h-1zM987 5h1v24h-1zM988 0h1v34h-1zM989 0h1v34h-1zM990 0h1v34h-1zM991 0h1v34h-1zM992 6h1v22h-1zM993 7h1v20h-1zM994 8h1v18h-1zM995 0h1v34h-1zM996 0h1v34h-1zM997 5h1v24h-1zM998 0h1v34h-1zM999 0h1v34h-1zM1000 0h1v34h-1zM1001 0h1v34h-1zM1002 0h1v34h-1zM1003 0h1v34h-1zM1004 4h1v27h-1zM1005 0h1v34h-1zM1006 0h1v34h-1zM1007 10h1v14h-1zM1008 0h1v34h-1zM1009 2h1v30h-1zM1010 0h1v34h-1zM1011 0h1v34h-1zM1012 1h1v32h-1zM1013 0h1v34h-1zM1014 8h1v18h-1zM1015 11h1v13h-1zM1016 10h1v14h-1zM1017 0h1v34h-1zM1018 0h1v34h-1zM1019 0h1v34h-1zM1020 2h1v30h-1zM1021 3h1v28h-1zM1022 0h1v34h-1zM1023 1h1v32h-1zM1024 0h1v34h-1zM1025 0h1v34h-1zM1026 0h1v34h-1zM1027 5h1v25h-1zM1028 0h1v34h-1zM1029 0h1v34h-1zM1030 10h1v14h-1zM1031 4h1v25h-1zM1032 5h1v24h-1zM1033 0h1v34h-1zM1034 0h1v34h-1zM1035 0h1v34h-1zM1036 0h1v34h-1zM1037 0h1v34h-1zM1038 1h1v32h-1zM1039 9h1v15h-1zM1040 11h1v12h-1zM1041 2h1v30h-1zM1042 0h1v34h-1zM1043 0h1v34h-1zM1044 0h1v34h-1z"/><path fill="#ff2020" d="M0 53h1v2h-1zM1 53h1v2h-1zM6 53h1v2h-1zM7 53h1v2h-1zM8 53h1v2h-1zM9 53h1v2h-1zM10 53h1v2h-1zM11 53h1v2h-1zM12 53h1v2h-1zM13 53h1v2h-1zM14 53h1v2h-1zM15 53h1v2h-1zM16 53h1v2h-1zM17 53h1v2h-1zM18 53h1v2h-1zM19 53h1v2h-1zM20 53h1v2h-1zM21 53h1v2h-1zM22 52h1v4h-1zM23 52h1v5h-1zM24 52h1v4h-1zM25 50h1v8h-1zM26 52h1v5h-1zM27 51h1v6h-1zM28 51h1v6h-1zM29 50h1v8h-1zM30 47h1v15h-1zM31 49h1v9h-1zM32 49h1v10h-1zM33 48h1v12h-1zM34 49h1v10h-1zM35 46h1v16h-1zM36 49h1v10h-1zM37 48h1v11h-1zM38 44h1v19h-1zM39 48h1v12h-1zM40 48h1v11h-1zM41 49h1v10h-1zM42 47h1v14h-1zM43 49h1v10h-1zM44 45h1v18h-1zM45 46h1v18h-1zM46 49h1v11h-1zM47 50h1v9h-1zM48 49h1v10h-1zM49 48h1v11h-1zM50 50h1v9h-1zM51 50h1v9h-1zM52 48h1v11h-1zM53 48h1v12h-1zM54 46h1v16h-1zM55 47h1v14h-1zM56 49h1v10h-1zM57 50h1v9h-1zM58 49h1v10h-1zM59 49h1v10h-1zM60 48h1v11h-1zM61 50h1v9h-1zM62 50h1v8h-1zM63 50h1v8h-1zM64 47h1v14h-1zM65 45h1v20h-1zM66 51h1v7h-1zM67 50h1v8h-1zM68 51h1v6h-1zM69 49h1v9h-1zM70 47h1v15h-1zM71 50h1v8h-1zM72 51h1v6h-1zM73 46h1v15h-1zM74 47h1v14h-1zM75 50h1v8h-1zM76 50h1v8h-1zM77 49h1v10h-1zM78 50h1v8h-1zM79 50h1v8h-1zM80 50h1v7h-1zM81 48h1v11h-1zM82 49h1v10h-1zM83 48h1v12h-1zM84 49h1v10h-1zM85 50h1v8h-1zM86 47h1v15h-1zM87 50h1v8h-1zM88 50h1v8h-1zM89 49h1v9h-1zM90 46h1v16h-1zM91 50h1v7h-1zM92 49h1v10h-1zM93 50h1v8h-1zM94 48h1v13h-1zM95 51h1v6h-1zM96 50h1v8h-1zM97 46h1v16h-1zM98 51h1v7h-1zM99 51h1v6h-1zM100 50h1v9h-1zM101 50h1v8h-1zM102 48h1v11h-1zM103 51h1v6h-1zM104 50h1v7h-1zM105 47h1v13h-1zM106 50h1v8h-1zM107 47h1v13h-1zM108 50h1v8h-1zM109 51h1v6h-1zM110 49h1v10h-1zM111 45h1v18h-1zM112 45h1v18h-1zM113 41h1v25h-1zM114 37h1v34h-1zM115 37h1v33h-1zM116 38h1v32h-1zM117 37h1v34h-1zM118 38h1v33h-1zM119 37h1v34h-1zM120 38h1v33h-1zM121 37h1v34h-1zM122 46h1v18h-1zM123 37h1v33h-1zM124 37h1v34h-1zM125 37h1v34h-1zM126 47h1v13h-1zM127 37h1v34h-1zM128 37h1v34h-1zM129 37h1v34h-1zM130 41h1v25h-1zM131 38h1v33h-1zM132 37h1v34h-1zM133 38h1v33h-1zM134 37h1v32h-1zM135 37h1v34h-1zM136 37h1v33h-1zM137 42h1v25h-1zM138 37h1v34h-1zM139 37h1v34h-1zM140 38h1v33h-1zM141 38h1v33h-1zM142 37h1v34h-1zM143 37h1v34h-1zM144 37h1v34h-1zM145 37h1v34h-1zM146 37h1v34h-1zM147 37h1v34h-1zM148 47h1v14h-1zM149 47h1v14h-1zM150 41h1v25h-1zM151 40h1v29h-1zM152 44h1v21h-1zM153 43h1v22h-1zM154 47h1v13h-1zM155 38h1v31h-1zM156 40h1v29h-1zM157 37h1v31h-1zM158 37h1v33h-1zM159 37h1v34h-1zM160 39h1v32h-1zM161 39h1v30h-1zM162 38h1v33h-1zM163 37h1v34h-1zM164 37h1v34h-1zM165 37h1v34h-1zM166 37h1v33h-1zM167 37h1v33h-1zM168 41h1v25h-1zM169 44h1v19h-1zM170 39h1v29h-1zM171 37h1v34h-1zM172 37h1v34h-1zM173 44h1v19h-1zM174 37h1v33h-1zM175 38h1v32h-1zM176 37h1v33h-1zM177 37h1v34h-1zM178 37h1v34h-1zM179 40h1v27h-1zM180 45h1v20h-1zM181 37h1v32h-1zM182 37h1v33h-1zM183 37h1v34h-1zM184 37h1v33h-1zM185 38h1v29h-1zM186 37h1v32h-1zM187 40h1v30h-1zM188 39h1v29h-1zM189 38h1v32h-1zM190 48h1v11h-1zM191 42h1v25h-1zM192 42h1v24h-1zM193 38h1v31h-1zM194 39h1v28h-1zM195 37h1v34h-1zM196 43h1v23h-1zM197 38h1v33h-1zM198 38h1v33h-1zM199 37h1v34h-1zM200 41h1v27h-1zM201 42h1v24h-1zM202 42h1v24h-1zM203 39h1v30h-1zM204 37h1v34h-1zM205 38h1v33h-1zM206 39h1v31h-1zM207 41h1v25h-1zM208 38h1v32h-1zM209 38h1v32h-1zM210 45h1v18h-1zM211 40h1v28h-1zM212 37h1v33h-1zM213 37h1v32h-1zM214 37h1v34h-1zM215 37h1v33h-1zM216 46h1v17h-1zM217 45h1v17h-1zM218 47h1v14h-1zM219 37h1v34h-1zM220 38h1v33h-1zM221 37h1v34h-1zM222 38h1v32h-1zM223 37h1v34h-1zM224 37h1v34h-1zM225 39h1v32h-1zM226 49h1v10h-1zM227 38h1v33h-1zM228 37h1v34h-1zM229 37h1v34h-1zM230 37h1v34h-1zM231 37h1v34h-1zM232 37h1v34h-1zM233 44h1v20h-1zM234 41h1v27h-1zM235 37h1v34h-1zM236 49h1v10h-1zM237 49h1v10h-1zM238 37h1v34h-1zM239 37h1v34h-1zM240 37h1v34h-1zM241 37h1v33h-1zM242 47h1v13h-1zM243 38h1v32h-1zM244 41h1v24h-1zM245 46h1v18h-1zM246 46h1v17h-1zM247 40h1v28h-1zM248 37h1v34h-1zM249 40h1v31h-1zM250 40h1v28h-1zM251 46h1v14h-1zM252 46h1v16h-1zM253 37h1v34h-1zM254 38h1v32h-1zM255 47h1v14h-1zM256 37h1v32h-1zM257 37h1v33h-1zM258 37h1v34h-1zM259 37h1v33h-1zM260 39h1v27h-1zM261 47h1v15h-1zM262 37h1v34h-1zM263 37h1v34h-1zM264 37h1v34h-1zM265 38h1v33h-1zM266 37h1v33h-1zM267 37h1v33h-1zM268 38h1v31h-1zM269 37h1v33h-1zM270 38h1v33h-1zM271 37h1v34h-1zM272 40h1v28h-1zM273 38h1v33h-1zM274 37h1v32h-1zM275 37h1v34h-1zM276 39h1v32h-1zM277 37h1v34h-1zM278 38h1v32h-1zM279 37h1v34h-1zM280 37h1v34h-1zM281 38h1v33h-1zM282 38h1v32h-1zM283 38h1v32h-1zM284 40h1v28h-1zM285 43h1v22h-1zM286 37h1v34h-1zM287 39h1v29h-1zM288 39h1v31h-1zM289 37h1v34h-1zM290 37h1v33h-1zM291 38h1v33h-1zM292 37h1v34h-1zM293 38h1v32h-1zM294 37h1v34h-1zM295 37h1v34h-1zM296 41h1v26h-1zM297 37h1v34h-1zM298 37h1v33h-1zM299 37h1v34h-1zM300 37h1v32h-1zM301 47h1v14h-1zM302 39h1v32h-1zM303 38h1v33h-1zM304 37h1v32h-1zM305 37h1v34h-1zM306 37h1v34h-1zM307 37h1v34h-1zM308 39h1v31h-1zM309 37h1v33h-1zM310 37h1v34h-1zM311 38h1v31h-1zM312 44h1v20h-1zM313 40h1v27h-1zM314 43h1v22h-1zM315 41h1v24h-1zM316 50h1v8h-1zM317 49h1v10h-1zM318 37h1v33h-1zM319 49h1v10h-1zM320 38h1v33h-1zM321 42h1v24h-1zM322 45h1v19h-1zM323 37h1v34h-1zM324 48h1v11h-1zM325 37h1v34h-1zM326 38h1v33h-1zM327 37h1v33h-1zM328 37h1v34h-1zM329 49h1v10h-1zM330 49h1v10h-1zM331 40h1v28h-1zM332 37h1v34h-1zM333 37h1v33h-1zM334 38h1v32h-1zM335 37h1v33h-1zM336 37h1v32h-1zM337 39h1v32h-1zM338 38h1v33h-1zM339 37h1v33h-1zM340 37h1v34h-1zM341 43h1v22h-1zM342 39h1v32h-1zM343 45h1v17h-1zM344 45h1v17h-1zM345 43h1v21h-1zM346 44h1v19h-1zM347 39h1v32h-1zM348 37h1v33h-1zM349 38h1v33h-1zM350 37h1v34h-1zM351 40h1v26h-1zM352 37h1v34h-1zM353 38h1v33h-1zM354 38h1v33h-1zM355 37h1v32h-1zM356 38h1v33h-1zM357 37h1v34h-1zM358 37h1v32h-1zM359 44h1v20h-1zM360 37h1v34h-1zM361 39h1v32h-1zM362 41h1v26h-1zM363 37h1v33h-1zM364 38h1v33h-1zM365 38h1v32h-1zM366 48h1v13h-1zM367 48h1v12h-1zM368 37h1v34h-1zM369 38h1v32h-1zM370 37h1v34h-1zM371 47h1v15h-1zM372 37h1v34h-1zM373 37h1v34h-1zM374 44h1v21h-1zM375 44h1v21h-1zM376 50h1v9h-1zM377 37h1v33h-1zM378 49h1v11h-1zM379 37h1v33h-1zM380 45h1v18h-1zM381 43h1v21h-1zM382 37h1v34h-1zM383 37h1v34h-1zM384 39h1v32h-1zM385 39h1v32h-1zM386 41h1v29h-1zM387 42h1v23h-1zM388 42h1v26h-1zM389 43h1v25h-1zM390 44h1v19h-1zM391 39h1v32h-1zM392 37h1v34h-1zM393 44h1v20h-1zM394 42h1v23h-1zM395 40h1v27h-1zM396 39h1v32h-1zM397 40h1v28h-1zM398 38h1v33h-1zM399 38h1v32h-1zM400 37h1v34h-1zM401 38h1v33h-1zM402 37h1v34h-1zM403 38h1v31h-1zM404 37h1v33h-1zM405 41h1v24h-1zM406 44h1v22h-1zM407 41h1v26h-1zM408 46h1v17h-1zM409 46h1v16h-1zM410 37h1v34h-1zM411 37h1v34h-1zM412 38h1v33h-1zM413 40h1v31h-1zM414 38h1v30h-1zM415 43h1v22h-1zM416 43h1v22h-1zM417 38h1v32h-1zM418 37h1v34h-1zM419 37h1v32h-1zM420 38h1v33h-1zM421 37h1v33h-1zM422 37h1v34h-1zM423 41h1v25h-1zM424 37h1v33h-1zM425 38h1v33h-1zM426 37h1v34h-1zM427 37h1v33h-1zM428 37h1v32h-1zM429 37h1v32h-1zM430 37h1v33h-1zM431 37h1v33h-1zM432 37h1v34h-1zM433 39h1v29h-1zM434 37h1v33h-1zM435 37h1v32h-1zM436 42h1v23h-1zM437 39h1v32h-1zM438 49h1v11h-1zM439 39h1v32h-1zM440 37h1v34h-1zM441 37h1v34h-1zM442 37h1v33h-1zM443 39h1v31h-1zM444 37h1v33h-1zM445 37h1v33h-1zM446 38h1v30h-1zM447 38h1v33h-1zM448 37h1v34h-1zM449 38h1v31h-1zM450 38h1v32h-1zM451 38h1v33h-1zM452 45h1v18h-1zM453 45h1v18h-1zM454 37h1v34h-1zM455 38h1v33h-1zM456 38h1v33h-1zM457 38h1v33h-1zM458 39h1v32h-1zM459 38h1v32h-1zM460 42h1v23h-1zM461 46h1v16h-1zM462 39h1v32h-1zM463 37h1v33h-1zM464 50h1v8h-1zM465 37h1v33h-1zM466 37h1v34h-1zM467 37h1v34h-1zM468 37h1v34h-1zM469 37h1v34h-1zM470 38h1v33h-1zM471 37h1v34h-1zM472 38h1v33h-1zM473 37h1v34h-1zM474 37h1v33h-1zM475 38h1v33h-1zM476 38h1v33h-1zM477 45h1v20h-1zM478 41h1v25h-1zM479 38h1v32h-1zM480 37h1v32h-1zM481 38h1v31h-1zM482 44h1v20h-1zM483 38h1v31h-1zM484 37h1v33h-1zM485 38h1v32h-1zM486 37h1v33h-1zM487 37h1v34h-1zM488 38h1v33h-1zM489 39h1v30h-1zM490 37h1v34h-1zM491 37h1v33h-1zM492 43h1v22h-1zM493 37h1v33h-1zM494 37h1v34h-1zM495 42h1v26h-1zM496 38h1v33h-1zM497 37h1v34h-1zM498 37h1v34h-1zM499 39h1v32h-1zM500 41h1v26h-1zM501 41h1v24h-1zM502 41h1v25h-1zM503 41h1v26h-1zM504 51h1v6h-1zM505 42h1v24h-1zM506 38h1v31h-1zM507 41h1v25h-1zM508 46h1v15h-1zM509 44h1v21h-1zM510 45h1v19h-1zM511 39h1v31h-1zM512 40h1v28h-1zM513 50h1v8h-1zM514 41h1v28h-1zM515 37h1v33h-1zM516 38h1v32h-1zM517 43h1v23h-1zM518 39h1v32h-1zM519 46h1v16h-1zM520 38h1v32h-1zM521 37h1v34h-1zM522 37h1v34h-1zM523 37h1v33h-1zM524 42h1v24h-1zM525 38h1v33h-1zM526 39h1v29h-1zM527 49h1v10h-1zM528 39h1v28h-1zM529 39h1v29h-1zM530 37h1v32h-1zM531 38h1v32h-1zM532 39h1v32h-1zM533 37h1v34h-1zM534 37h1v32h-1zM535 46h1v15h-1zM536 48h1v13h-1zM537 40h1v28h-1zM538 38h1v30h-1zM539 49h1v9h-1zM540 38h1v32h-1zM541 49h1v11h-1zM542 49h1v10h-1zM543 50h1v8h-1zM544 45h1v18h-1zM545 45h1v19h-1zM546 38h1v32h-1zM547 37h1v34h-1zM548 37h1v34h-1zM549 38h1v33h-1zM550 38h1v33h-1zM551 38h1v33h-1zM552 39h1v31h-1zM553 38h1v33h-1zM554 37h1v32h-1zM555 37h1v34h-1zM556 41h1v28h-1zM557 41h1v26h-1zM558 37h1v34h-1zM559 39h1v32h-1zM560 42h1v26h-1zM561 40h1v29h-1zM562 37h1v34h-1zM563 38h1v33h-1zM564 37h1v34h-1zM565 38h1v33h-1zM566 41h1v27h-1zM567 39h1v28h-1zM568 42h1v23h-1zM569 43h1v23h-1zM570 49h1v9h-1zM571 37h1v34h-1zM572 37h1v33h-1zM573 37h1v34h-1zM574 37h1v34h-1zM575 37h1v34h-1zM576 37h1v34h-1zM577 37h1v34h-1zM578 38h1v33h-1zM579 37h1v34h-1zM580 37h1v34h-1zM581 49h1v11h-1zM582 38h1v33h-1zM583 38h1v33h-1zM584 38h1v33h-1zM585 37h1v33h-1zM586 38h1v33h-1zM587 38h1v33h-1zM588 45h1v17h-1zM589 40h1v29h-1zM590 40h1v31h-1zM591 39h1v31h-1zM592 49h1v11h-1zM593 37h1v34h-1zM594 37h1v34h-1zM595 37h1v34h-1zM596 43h1v23h-1zM597 42h1v25h-1zM598 37h1v33h-1zM599 37h1v34h-1zM600 37h1v34h-1zM601 39h1v32h-1zM602 37h1v34h-1zM603 37h1v33h-1zM604 37h1v34h-1zM605 45h1v18h-1zM606 44h1v21h-1zM607 41h1v28h-1zM608 47h1v14h-1zM609 50h1v9h-1zM610 37h1v34h-1zM611 37h1v34h-1zM612 49h1v10h-1zM613 49h1v11h-1zM614 37h1v34h-1zM615 37h1v32h-1zM616 37h1v34h-1zM617 37h1v33h-1zM618 40h1v27h-1zM619 37h1v32h-1zM620 37h1v33h-1zM621 37h1v34h-1zM622 37h1v33h-1zM623 38h1v32h-1zM624 37h1v34h-1zM625 37h1v33h-1zM626 39h1v32h-1zM627 37h1v34h-1zM628 39h1v32h-1zM629 38h1v31h-1zM630 37h1v34h-1zM631 37h1v33h-1zM632 37h1v34h-1zM633 38h1v31h-1zM634 38h1v32h-1zM635 38h1v32h-1zM636 37h1v33h-1zM637 37h1v34h-1zM638 47h1v14h-1zM639 44h1v20h-1zM640 37h1v33h-1zM641 38h1v32h-1zM642 37h1v34h-1zM643 37h1v33h-1zM644 37h1v33h-1zM645 40h1v28h-1zM646 38h1v32h-1zM647 47h1v14h-1zM648 47h1v14h-1zM649 42h1v23h-1zM650 45h1v19h-1zM651 51h1v7h-1zM652 51h1v6h-1zM653 40h1v29h-1zM654 37h1v33h-1zM655 38h1v33h-1zM656 37h1v32h-1zM657 37h1v34h-1zM658 46h1v15h-1zM659 37h1v32h-1zM660 38h1v31h-1zM661 37h1v34h-1zM662 37h1v34h-1zM663 39h1v32h-1zM664 42h1v25h-1zM665 42h1v22h-1zM666 38h1v32h-1zM667 37h1v34h-1zM668 38h1v33h-1zM669 39h1v32h-1zM670 40h1v27h-1zM671 44h1v22h-1zM672 42h1v24h-1zM673 40h1v27h-1zM674 38h1v32h-1zM675 37h1v32h-1zM676 37h1v34h-1zM677 37h1v34h-1zM678 45h1v17h-1zM679 37h1v34h-1zM680 37h1v34h-1zM681 37h1v33h-1zM682 37h1v34h-1zM683 37h1v33h-1zM684 37h1v34h-1zM685 44h1v19h-1zM686 45h1v18h-1zM687 38h1v33h-1zM688 38h1v33h-1zM689 44h1v20h-1zM690 37h1v34h-1zM691 37h1v34h-1zM692 37h1v34h-1zM693 38h1v33h-1zM694 37h1v32h-1zM695 46h1v15h-1zM696 37h1v33h-1zM697 39h1v31h-1zM698 37h1v31h-1zM699 37h1v34h-1zM700 37h1v33h-1zM701 37h1v33h-1zM702 39h1v29h-1zM703 37h1v32h-1zM704 37h1v33h-1zM705 37h1v34h-1zM706 38h1v33h-1zM707 37h1v32h-1zM708 48h1v11h-1zM709 48h1v12h-1zM710 37h1v34h-1zM711 37h1v33h-1zM712 37h1v34h-1zM713 39h1v30h-1zM714 38h1v33h-1zM715 39h1v32h-1zM716 39h1v30h-1zM717 37h1v32h-1zM718 39h1v29h-1zM719 37h1v34h-1zM720 43h1v23h-1zM721 41h1v27h-1zM722 37h1v33h-1zM723 37h1v33h-1zM724 47h1v14h-1zM725 40h1v28h-1zM726 47h1v13h-1zM727 48h1v13h-1zM728 38h1v33h-1zM729 38h1v33h-1zM730 37h1v34h-1zM731 37h1v33h-1zM732 38h1v33h-1zM733 41h1v27h-1zM734 40h1v27h-1zM735 38h1v33h-1zM736 49h1v10h-1zM737 37h1v34h-1zM738 37h1v33h-1zM739 37h1v34h-1zM740 37h1v34h-1zM741 37h1v34h-1zM742 38h1v33h-1zM743 37h1v32h-1zM744 37h1v33h-1zM745 38h1v33h-1zM746 45h1v19h-1zM747 46h1v16h-1zM748 37h1v32h-1zM749 40h1v29h-1zM750 40h1v29h-1zM751 38h1v32h-1zM752 37h1v33h-1zM753 42h1v23h-1zM754 43h1v22h-1zM755 39h1v30h-1zM756 37h1v34h-1zM757 37h1v34h-1zM758 37h1v34h-1zM759 39h1v31h-1zM760 37h1v34h-1zM761 37h1v34h-1zM762 39h1v30h-1zM763 37h1v34h-1zM764 39h1v30h-1zM765 37h1v34h-1zM766 41h1v26h-1zM767 37h1v34h-1zM768 41h1v26h-1zM769 37h1v34h-1zM770 41h1v25h-1zM771 45h1v19h-1zM772 40h1v27h-1zM773 45h1v18h-1zM774 41h1v27h-1zM775 45h1v18h-1zM776 47h1v15h-1zM777 47h1v13h-1zM778 47h1v14h-1zM779 42h1v24h-1zM780 48h1v13h-1zM781 40h1v28h-1zM782 45h1v18h-1zM783 40h1v29h-1zM784 45h1v18h-1zM785 46h1v16h-1zM786 47h1v15h-1zM787 45h1v18h-1zM788 47h1v14h-1zM789 41h1v27h-1zM790 45h1v18h-1zM791 40h1v27h-1zM792 46h1v16h-1zM793 47h1v15h-1zM794 45h1v18h-1zM795 46h1v16h-1zM796 47h1v14h-1zM797 37h1v33h-1zM798 46h1v16h-1zM799 45h1v18h-1zM800 44h1v19h-1zM801 47h1v14h-1zM802 47h1v14h-1zM803 47h1v14h-1zM804 48h1v13h-1zM805 40h1v29h-1zM806 39h1v29h-1zM807 43h1v23h-1zM808 47h1v14h-1zM809 47h1v13h-1zM810 45h1v18h-1zM811 47h1v14h-1zM812 42h1v24h-1zM813 39h1v30h-1zM814 45h1v17h-1zM815 38h1v32h-1zM816 45h1v18h-1zM817 47h1v14h-1zM818 47h1v13h-1zM819 46h1v16h-1zM820 40h1v28h-1zM821 46h1v15h-1zM822 45h1v18h-1zM823 46h1v17h-1zM824 47h1v14h-1zM825 45h1v18h-1zM826 46h1v16h-1zM827 41h1v26h-1zM828 48h1v13h-1zM829 46h1v16h-1zM830 46h1v16h-1zM831 41h1v26h-1zM832 46h1v16h-1zM833 46h1v16h-1zM834 42h1v25h-1zM835 39h1v31h-1zM836 41h1v26h-1zM837 41h1v26h-1zM838 47h1v14h-1zM839 43h1v23h-1zM840 46h1v16h-1zM841 47h1v14h-1zM842 41h1v26h-1zM843 45h1v18h-1zM844 43h1v22h-1zM845 47h1v14h-1zM846 46h1v16h-1zM847 45h1v17h-1zM848 46h1v16h-1zM849 48h1v13h-1zM850 44h1v19h-1zM851 44h1v19h-1zM852 37h1v34h-1zM853 41h1v25h-1zM854 39h1v30h-1zM855 37h1v34h-1zM856 37h1v34h-1zM857 37h1v34h-1zM858 37h1v34h-1zM859 46h1v16h-1zM860 37h1v34h-1zM861 44h1v20h-1zM862 37h1v34h-1zM863 40h1v29h-1zM864 37h1v32h-1zM865 37h1v33h-1zM866 49h1v10h-1zM867 39h1v31h-1zM868 39h1v31h-1zM869 37h1v34h-1zM870 37h1v34h-1zM871 37h1v34h-1zM872 37h1v34h-1zM873 37h1v33h-1zM874 37h1v34h-1zM875 37h1v33h-1zM876 37h1v34h-1zM877 37h1v34h-1zM878 38h1v32h-1zM879 37h1v32h-1zM880 41h1v27h-1zM881 38h1v31h-1zM882 37h1v34h-1zM883 38h1v33h-1zM884 37h1v33h-1zM885 48h1v12h-1zM886 37h1v34h-1zM887 43h1v22h-1zM888 44h1v20h-1zM889 43h1v22h-1zM890 43h1v23h-1zM891 37h1v34h-1zM892 38h1v33h-1zM893 37h1v34h-1zM894 37h1v34h-1zM895 37h1v34h-1zM896 38h1v33h-1zM897 39h1v32h-1zM898 37h1v33h-1zM899 37h1v34h-1zM900 37h1v34h-1zM901 47h1v14h-1zM902 42h1v24h-1zM903 40h1v26h-1zM904 39h1v30h-1zM905 39h1v32h-1zM906 40h1v29h-1zM907 37h1v34h-1zM908 38h1v32h-1zM909 37h1v34h-1zM910 37h1v34h-1zM911 47h1v14h-1zM912 38h1v33h-1zM913 37h1v34h-1zM914 37h1v32h-1zM915 41h1v25h-1zM916 44h1v22h-1zM917 44h1v22h-1zM918 49h1v10h-1zM919 41h1v27h-1zM920 37h1v34h-1zM921 37h1v34h-1zM922 41h1v25h-1zM923 47h1v13h-1zM924 38h1v33h-1zM925 38h1v33h-1zM926 38h1v33h-1zM927 39h1v29h-1zM928 40h1v26h-1zM929 38h1v33h-1zM930 37h1v33h-1zM931 43h1v23h-1zM932 49h1v10h-1zM933 47h1v13h-1zM934 48h1v13h-1zM935 37h1v34h-1zM936 37h1v34h-1zM937 37h1v34h-1zM938 38h1v32h-1zM939 37h1v34h-1zM940 39h1v32h-1zM941 37h1v33h-1zM942 37h1v34h-1zM943 46h1v18h-1zM944 38h1v33h-1zM945 37h1v33h-1zM946 37h1v34h-1zM947 37h1v34h-1zM948 48h1v13h-1zM949 39h1v29h-1zM950 37h1v34h-1zM951 37h1v34h-1zM952 37h1v34h-1zM953 37h1v33h-1zM954 48h1v12h-1zM955 40h1v30h-1zM956 37h1v32h-1zM957 39h1v30h-1zM958 39h1v30h-1zM959 38h1v30h-1zM960 39h1v30h-1zM961 45h1v17h-1zM962 47h1v13h-1zM963 38h1v33h-1zM964 37h1v33h-1zM965 37h1v34h-1zM966 38h1v33h-1zM967 38h1v33h-1zM968 46h1v17h-1zM969 37h1v34h-1zM970 46h1v16h-1zM971 37h1v34h-1zM972 39h1v31h-1zM973 38h1v32h-1zM974 37h1v34h-1zM975 48h1v13h-1zM976 47h1v12h-1zM977 38h1v33h-1zM978 40h1v29h-1zM979 40h1v28h-1zM980 37h1v34h-1zM981 38h1v33h-1zM982 38h1v30h-1zM983 37h1v34h-1zM984 37h1v34h-1zM985 37h1v34h-1zM986 38h1v32h-1zM987 42h1v24h-1zM988 37h1v34h-1zM989 37h1v34h-1zM990 37h1v33h-1zM991 38h1v33h-1zM992 44h1v22h-1zM993 45h1v19h-1zM994 44h1v18h-1zM995 37h1v34h-1zM996 39h1v32h-1zM997 43h1v23h-1zM998 37h1v34h-1zM999 37h1v33h-1zM1000 37h1v34h-1zM1001 39h1v31h-1zM1002 37h1v33h-1zM1003 38h1v33h-1zM1004 40h1v28h-1zM1005 37h1v34h-1zM1006 37h1v33h-1zM1007 47h1v15h-1zM1008 37h1v33h-1zM1009 40h1v28h-1zM1010 39h1v31h-1zM1011 37h1v33h-1zM1012 40h1v31h-1zM1013 38h1v33h-1zM1014 45h1v19h-1zM1015 47h1v14h-1zM1016 46h1v15h-1zM1017 37h1v33h-1zM1018 38h1v33h-1zM1019 37h1v33h-1zM1020 38h1v30h-1zM1021 41h1v27h-1zM1022 37h1v33h-1zM1023 38h1v33h-1zM1024 38h1v33h-1zM1025 39h1v31h-1zM1026 37h1v33h-1zM1027 41h1v25h-1zM1028 37h1v33h-1zM1029 37h1v34h-1zM1030 47h1v13h-1zM1031 42h1v24h-1zM1032 43h1v22h-1zM1033 37h1v34h-1zM1034 38h1v32h-1zM1035 38h1v33h-1zM1036 38h1v33h-1zM1037 38h1v33h-1zM1038 38h1v31h-1zM1039 46h1v16h-1zM1040 47h1v13h-1zM1041 40h1v31h-1zM1042 38h1v33h-1zM1043 37h1v34h-1zM1044 37h1v33h-1z"/></svg>
<div style="left:103px;top:678px;width:2px;height:71px;background:#90c8b0;"></div>
<svg style="left:92px;top:700px" width="29" height="30"><path d="M2.5 1.5L28 15L2.5 28.5Z" fill="#c0ffc0" stroke="#10f010" stroke-width="1.6"/></svg>
<div style="left:26px;top:749px;width:1045px;height:25px;background:#1c1c1c;"></div>
<svg style="left:26px;top:749px" width="1045" height="10"><rect x="1.0" y="0" width="1.5" height="9" fill="#d8d8d8"/><rect x="10.5" y="0" width="1.5" height="4" fill="#c0c0c0"/><rect x="20.0" y="0" width="1.5" height="4" fill="#c0c0c0"/><rect x="29.6" y="0" width="1.5" height="4" fill="#c0c0c0"/><rect x="39.1" y="0" width="1.5" height="4" fill="#c0c0c0"/><rect x="48.6" y="0" width="1.5" height="9" fill="#d8d8d8"/><rect x="58.1" y="0" width="1.5" height="4" fill="#c0c0c0"/><rect x="67.6" y="0" width="1.5" height="4" fill="#c0c0c0"/><rect x="77.2" y="0" width="1.5" height="4" fill="#c0c0c0"/><rect x="86.7" y="0" width="1.5" height="4" fill="#c0c0c0"/><rect x="96.2" y="0" width="1.5" height="9" fill="#d8d8d8"/><rect x="105.7" y="0" width="1.5" height="4" fill="#c0c0c0"/><rect x="115.2" y="0" width="1.5" height="4" fill="#c0c0c0"/><rect x="124.8" y="0" width="1.5" height="4" fill="#c0c0c0"/><rect x="134.3" y="0" width="1.5" height="4" fill="#c0c0c0"/><rect x="143.8" y="0" width="1.5" height="9" fill="#d8d8d8"/><rect x="153.3" y="0" width="1.5" height="4" fill="#c0c0c0"/><rect x="162.8" y="0" width="1.5" height="4" fill="#c0c0c0"/><rect x="172.4" y="0" width="1.5" height="4" fill="#c0c0c0"/><rect x="181.9" y="0" width="1.5" height="4" fill="#c0c0c0"/><rect x="191.4" y="0" width="1.5" height="9" fill="#d8d8d8"/><rect x="200.9" y="0" width="1.5" height="4" fill="#c0c0c0"/><rect x="210.4" y="0" width="1.5" height="4" fill="#c0c0c0"/><rect x="220.0" y="0" width="1.5" height="4" fill="#c0c0c0"/><rect x="229.5" y="0" width="1.5" height="4" fill="#c0c0c0"/><rect x="239.0" y="0" width="1.5" height="9" fill="#d8d8d8"/><rect x="248.5" y="0" width="1.5" height="4" fill="#c0c0c0"/><rect x="258.0" y="0" width="1.5" height="4" fill="#c0c0c0"/><rect x="267.6" y="0" width="1.5" height="4" fill="#c0c0c0"/><rect x="277.1" y="0" width="1.5" height="4" fill="#c0c0c0"/><rect x="286.6" y="0" width="1.5" height="9" fill="#d8d8d8"/><rect x="296.1" y="0" width="1.5" height="4" fill="#c0c0c0"/><rect x="305.6" y="0" width="1.5" height="4" fill="#c0c0c0"/><rect x="315.2" y="0" width="1.5" height="4" fill="#c0c0c0"/><rect x="324.7" y="0" width="1.5" height="4" fill="#c0c0c0"/><rect x="334.2" y="0" width="1.5" height="9" fill="#d8d8d8"/><rect x="343.7" y="0" width="1.5" height="4" fill="#c0c0c0"/><rect x="353.2" y="0" width="1.5" height="4" fill="#c0c0c0"/><rect x="362.8" y="0" width="1.5" height="4" fill="#c0c0c0"/><rect x="372.3" y="0" width="1.5" height="4" fill="#c0c0c0"/><rect x="381.8" y="0" width="1.5" height="9" fill="#d8d8d8"/><rect x="391.3" y="0" width="1.5" height="4" fill="#c0c0c0"/><rect x="400.8" y="0" width="1.5" height="4" fill="#c0c0c0"/><rect x="410.4" y="0" width="1.5" height="4" fill="#c0c0c0"/><rect x="419.9" y="0" width="1.5" height="4" fill="#c0c0c0"/><rect x="429.4" y="0" width="1.5" height="9" fill="#d8d8d8"/><rect x="438.9" y="0" width="1.5" height="4" fill="#c0c0c0"/><rect x="448.4" y="0" width="1.5" height="4" fill="#c0c0c0"/><rect x="458.0" y="0" width="1.5" height="4" fill="#c0c0c0"/><rect x="467.5" y="0" width="1.5" height="4" fill="#c0c0c0"/><rect x="477.0" y="0" width="1.5" height="9" fill="#d8d8d8"/><rect x="486.5" y="0" width="1.5" height="4" fill="#c0c0c0"/><rect x="496.0" y="0" width="1.5" height="4" fill="#c0c0c0"/><rect x="505.6" y="0" width="1.5" height="4" fill="#c0c0c0"/><rect x="515.1" y="0" width="1.5" height="4" fill="#c0c0c0"/><rect x="524.6" y="0" width="1.5" height="9" fill="#d8d8d8"/><rect x="534.1" y="0" width="1.5" height="4" fill="#c0c0c0"/><rect x="543.6" y="0" width="1.5" height="4" fill="#c0c0c0"/><rect x="553.2" y="0" width="1.5" height="4" fill="#c0c0c0"/><rect x="562.7" y="0" width="1.5" height="4" fill="#c0c0c0"/><rect x="572.2" y="0" width="1.5" height="9" fill="#d8d8d8"/><rect x="581.7" y="0" width="1.5" height="4" fill="#c0c0c0"/><rect x="591.2" y="0" width="1.5" height="4" fill="#c0c0c0"/><rect x="600.8" y="0" width="1.5" height="4" fill="#c0c0c0"/><rect x="610.3" y="0" width="1.5" height="4" fill="#c0c0c0"/><rect x="619.8" y="0" width="1.5" height="9" fill="#d8d8d8"/><rect x="629.3" y="0" width="1.5" height="4" fill="#c0c0c0"/><rect x="638.8" y="0" width="1.5" height="4" fill="#c0c0c0"/><rect x="648.4" y="0" width="1.5" height="4" fill="#c0c0c0"/><rect x="657.9" y="0" width="1.5" height="4" fill="#c0c0c0"/><rect x="667.4" y="0" width="1.5" height="9" fill="#d8d8d8"/><rect x="676.9" y="0" width="1.5" height="4" fill="#c0c0c0"/><rect x="686.4" y="0" width="1.5" height="4" fill="#c0c0c0"/><rect x="696.0" y="0" width="1.5" height="4" fill="#c0c0c0"/><rect x="705.5" y="0" width="1.5" height="4" fill="#c0c0c0"/><rect x="715.0" y="0" width="1.5" height="9" fill="#d8d8d8"/><rect x="724.5" y="0" width="1.5" height="4" fill="#c0c0c0"/><rect x="734.0" y="0" width="1.5" height="4" fill="#c0c0c0"/><rect x="743.6" y="0" width="1.5" height="4" fill="#c0c0c0"/><rect x="753.1" y="0" width="1.5" height="4" fill="#c0c0c0"/><rect x="762.6" y="0" width="1.5" height="9" fill="#d8d8d8"/><rect x="772.1" y="0" width="1.5" height="4" fill="#c0c0c0"/><rect x="781.6" y="0" width="1.5" height="4" fill="#c0c0c0"/><rect x="791.2" y="0" width="1.5" height="4" fill="#c0c0c0"/><rect x="800.7" y="0" width="1.5" height="4" fill="#c0c0c0"/><rect x="810.2" y="0" width="1.5" height="9" fill="#d8d8d8"/><rect x="819.7" y="0" width="1.5" height="4" fill="#c0c0c0"/><rect x="829.2" y="0" width="1.5" height="4" fill="#c0c0c0"/><rect x="838.8" y="0" width="1.5" height="4" fill="#c0c0c0"/><rect x="848.3" y="0" width="1.5" height="4" fill="#c0c0c0"/><rect x="857.8" y="0" width="1.5" height="9" fill="#d8d8d8"/><rect x="867.3" y="0" width="1.5" height="4" fill="#c0c0c0"/><rect x="876.8" y="0" width="1.5" height="4" fill="#c0c0c0"/><rect x="886.4" y="0" width="1.5" height="4" fill="#c0c0c0"/><rect x="895.9" y="0" width="1.5" height="4" fill="#c0c0c0"/><rect x="905.4" y="0" width="1.5" height="9" fill="#d8d8d8"/><rect x="914.9" y="0" width="1.5" height="4" fill="#c0c0c0"/><rect x="924.4" y="0" width="1.5" height="4" fill="#c0c0c0"/><rect x="934.0" y="0" width="1.5" height="4" fill="#c0c0c0"/><rect x="943.5" y="0" width="1.5" height="4" fill="#c0c0c0"/><rect x="953.0" y="0" width="1.5" height="9" fill="#d8d8d8"/><rect x="962.5" y="0" width="1.5" height="4" fill="#c0c0c0"/><rect x="972.0" y="0" width="1.5" height="4" fill="#c0c0c0"/><rect x="981.6" y="0" width="1.5" height="4" fill="#c0c0c0"/><rect x="991.1" y="0" width="1.5" height="4" fill="#c0c0c0"/><rect x="1000.6" y="0" width="1.5" height="9" fill="#d8d8d8"/><rect x="1010.1" y="0" width="1.5" height="4" fill="#c0c0c0"/><rect x="1019.6" y="0" width="1.5" height="4" fill="#c0c0c0"/><rect x="1029.2" y="0" width="1.5" height="4" fill="#c0c0c0"/><rect x="1038.7" y="0" width="1.5" height="4" fill="#c0c0c0"/></svg>
<div class="t " style="left:28px;top:755px;font-size:15px;color:#c8c8c8;">0:00</div>
<div class="t " style="left:123px;top:755px;font-size:15px;color:#c8c8c8;">0:20</div>
<div class="t " style="left:218px;top:755px;font-size:15px;color:#c8c8c8;">0:40</div>
<div class="t " style="left:314px;top:755px;font-size:15px;color:#c8c8c8;">1:00</div>
<div class="t " style="left:409px;top:755px;font-size:15px;color:#c8c8c8;">1:20</div>
<div class="t " style="left:504px;top:755px;font-size:15px;color:#c8c8c8;">1:40</div>
<div class="t " style="left:599px;top:755px;font-size:15px;color:#c8c8c8;">2:00</div>
<div class="t " style="left:694px;top:755px;font-size:15px;color:#c8c8c8;">2:20</div>
<div class="t " style="left:790px;top:755px;font-size:15px;color:#c8c8c8;">2:40</div>
<div class="t " style="left:885px;top:755px;font-size:15px;color:#c8c8c8;">3:00</div>
<div class="t " style="left:980px;top:755px;font-size:15px;color:#c8c8c8;">3:20</div>
<div style="left:23px;top:774px;width:1048px;height:3px;background:#ececec;"></div>
<div style="left:14px;top:786px;width:1057px;height:27px;background:#4a4a4a;"></div>
<div style="left:14px;top:786px;width:42px;height:27px;background:#5a5a5a;"></div>
<div style="left:56px;top:789px;width:1015px;height:21px;background:#a0a0a0;"></div>
<svg style="left:18px;top:790px" width="20" height="20"><polyline points="14,3 6,10 14,17" fill="none" stroke="#202020" stroke-width="3"/></svg>
<div style="left:14px;top:814px;width:1057px;height:58px;background:#000000;"></div>
<div class="t " style="left:34px;top:820px;font-size:18px;color:#dcdcdc;"><span class="c">立</span><span class="c">体</span><span class="c">声</span></div>
<div class="t " style="left:31px;top:848px;font-size:18px;color:#dcdcdc;"><span class="c">修</span><span class="c">改</span><span class="c">状</span><span class="c">态</span></div>
<svg style="left:105px;top:826px" width="14" height="10"><polygon points="1,9 7,2 13,9" fill="#e0e0e0"/></svg>
<div style="left:120px;top:818px;width:1px;height:24px;background:#303030;"></div>
<div style="left:120px;top:846px;width:1px;height:24px;background:#303030;"></div>
<div class="t m" style="left:452px;top:820px;font-size:17px;color:#e0e0e0;">00 to 3:59.198 (3:59.198)</div>
<div class="t m" style="left:452px;top:847px;font-size:17px;color:#e0e0e0;">lec 16 bit, 44100Hz, stereo</div>
<svg style="left:756px;top:826px" width="14" height="10"><polygon points="1,1 13,1 7,8" fill="#e0e0e0"/></svg>
<div style="left:771px;top:818px;width:1px;height:26px;background:#303030;"></div>
<div class="t m" style="left:836px;top:820px;font-size:17px;color:#e0e0e0;">16.210</div>
<svg style="left:941px;top:826px" width="14" height="10"><polygon points="1,9 7,2 13,9" fill="#e0e0e0"/></svg>
<div style="left:958px;top:818px;width:1px;height:26px;background:#303030;"></div>
<svg style="left:955px;top:828px" width="116" height="36"><path d="M3 2L27 0L30 30L6 33Z" fill="#1c1c1c"/><path d="M30 2L54 0L57 30L33 33Z" fill="#1c1c1c"/><path d="M56 2L80 0L83 30L59 33Z" fill="#1c1c1c"/><path d="M83 2L107 0L110 30L86 33Z" fill="#1c1c1c"/></svg>
<div class="t " style="left:961px;top:830px;font-size:24px;color:#050505;font-weight:bold;">K</div>
<div class="t " style="left:988px;top:830px;font-size:24px;color:#050505;font-weight:bold;">K</div>
<div class="t " style="left:1013px;top:830px;font-size:24px;color:#050505;font-weight:bold;"><span class="c">下</span></div>
<div class="t " style="left:1040px;top:830px;font-size:24px;color:#050505;font-weight:bold;"><span class="c">载</span></div>
<div class="t " style="left:958px;top:864px;font-size:12px;color:#2e2e2e;font-weight:bold;letter-spacing:1px;">www.kkx.net</div>
<div style="left:165px;top:80px;width:287px;height:799px;background:#ffffff;"></div>
<div style="left:164px;top:80px;width:1px;height:799px;background:#404040;"></div>
<div style="left:451px;top:80px;width:2px;height:799px;background:#3c3c3c;"></div>
<div class="t " style="left:213px;top:84px;font-size:19px;color:#101010;line-height:24px;"><span class="c">删</span><span class="c">改</span>(<u>C</u>)...</div>
<svg style="left:171px;top:82px" width="28" height="28" viewBox="0 0 28 28"><rect x="2" y="6" width="24" height="17" fill="#000"/><circle cx="14" cy="14.5" r="5.5" fill="none" stroke="#e00000" stroke-width="2.5"/><path d="M10 11L18 18" stroke="#e00000" stroke-width="2.5"/></svg>
<div class="t " style="left:213px;top:118px;font-size:19px;color:#101010;line-height:24px;"><span class="c">压</span><span class="c">缩</span><span class="c">器</span>/<span class="c">扩</span><span class="c">展</span><span class="c">器</span>(<u>K</u>)...</div>
<svg style="left:171px;top:116px" width="28" height="28" viewBox="0 0 28 28"><g fill="#1a6cff"><path d="M8 3L13 8H10V12H6V8H3Z"/><path d="M8 25L13 20H10V16H6V20H3Z"/>
<path d="M20 12L25 7H22V3H18V7H15Z"/><path d="M20 16L25 21H22V25H18V21H15Z"/></g></svg>
<div class="t " style="left:213px;top:152px;font-size:19px;color:#101010;line-height:24px;"><span class="c">多</span><span class="c">普</span><span class="c">勒</span>(<u>D</u>)...</div>
<svg style="left:171px;top:150px" width="28" height="28" viewBox="0 0 28 28"><defs><radialGradient id="dp" cx="0.4" cy="0.35" r="0.6"><stop offset="0" stop-color="#c0e8ff"/><stop offset="0.4" stop-color="#2a8aff"/><stop offset="1" stop-color="#0010c0"/></radialGradient></defs>
<circle cx="14" cy="11" r="8.5" fill="url(#dp)"/><path d="M6 23H22" stroke="#e8d040" stroke-width="2"/><circle cx="6" cy="23" r="2.5" fill="#fff" stroke="#aaa"/><circle cx="22" cy="23" r="2.5" fill="#fff" stroke="#aaa"/></svg>
<div class="t " style="left:213px;top:186px;font-size:19px;color:#101010;line-height:24px;"><span class="c">动</span><span class="c">态</span>(<u>Y</u>)...</div>
<svg style="left:171px;top:184px" width="28" height="28" viewBox="0 0 28 28"><path d="M4 3L8 8L12 3M8 8V13" stroke="#444" stroke-width="2.2" fill="none"/><path d="M6 23L20 8" stroke="#e8d040" stroke-width="2"/>
<circle cx="6" cy="23" r="2.5" fill="#fff" stroke="#aaa"/><circle cx="21" cy="6" r="2.5" fill="#fff" stroke="#aaa"/><path d="M14 15L23 24M23 15L14 24" stroke="#444" stroke-width="2.4"/></svg>
<div class="t " style="left:213px;top:220px;font-size:19px;color:#101010;line-height:24px;"><span class="c">回</span><span class="c">声</span>(<u>E</u>)...</div>
<svg style="left:171px;top:218px" width="28" height="28" viewBox="0 0 28 28"><path d="M3 11H12V7.5L17.5 13.5L12 19.5V16H3Z" fill="#0000e0"/><path d="M18 8.5A5 5 0 0 1 18 18.5Z" fill="#40c0ff"/><path d="M11.5 5L18.5 11" stroke="#1a6cff" stroke-width="3"/><path d="M9 2.5H16L9 9Z" fill="#1a6cff"/><path d="M11.5 22L18.5 16" stroke="#1a6cff" stroke-width="3"/><path d="M9 24.5H16L9 18Z" fill="#1a6cff"/></svg>
<div class="t " style="left:213px;top:254px;font-size:19px;color:#101010;line-height:24px;"><span class="c">滤</span><span class="c">波</span><span class="c">器</span>(<u>F</u>)</div>
<svg style="left:434px;top:260px" width="8" height="12"><polygon points="1,1 7,6 1,11" fill="#101010"/></svg>
<div class="t " style="left:213px;top:288px;font-size:19px;color:#101010;line-height:24px;"><span class="c">镶</span><span class="c">边</span><span class="c">器</span>(<u>G</u>)...</div>
<svg style="left:171px;top:286px" width="28" height="28" viewBox="0 0 28 28"><path d="M3 20C6 26 9 22 11 15C13 8 16 4 19 6C23 9 21 16 25 14" stroke="#1a3aff" stroke-width="2" fill="none"/><path d="M6 18C8 10 11 12 13 16C15 20 18 18 20 11" stroke="#5ab0ff" stroke-width="2" fill="none"/></svg>
<div class="t " style="left:213px;top:322px;font-size:19px;color:#101010;line-height:24px;"><span class="c">频</span><span class="c">率</span><span class="c">混</span><span class="c">合</span>(<u>B</u>)...</div>
<svg style="left:171px;top:320px" width="28" height="28" viewBox="0 0 28 28"><defs><linearGradient id="fq" x1="0" y1="0" x2="1" y2="1"><stop offset="0" stop-color="#ff3000"/><stop offset="0.5" stop-color="#00e060"/><stop offset="1" stop-color="#6000ff"/></linearGradient></defs>
<path d="M10 3H18V10H25V18H18V25H10V18H3V10H10Z" fill="url(#fq)"/><rect x="11" y="3" width="6" height="5" fill="#ff8000"/><rect x="3" y="11" width="5" height="6" fill="#8000e0"/><rect x="20" y="11" width="5" height="6" fill="#ff8000"/><rect x="11" y="20" width="6" height="5" fill="#6000c0"/></svg>
<div class="t " style="left:213px;top:356px;font-size:19px;color:#101010;line-height:24px;"><span class="c">内</span><span class="c">插</span>(<u>L</u>)</div>
<svg style="left:171px;top:354px" width="28" height="28" viewBox="0 0 28 28"><path d="M6 22L22 5V22Z" fill="none" stroke="#888" stroke-width="1.2"/><circle cx="6" cy="22" r="3" fill="#fff" stroke="#999"/><circle cx="22" cy="5" r="3" fill="#fff" stroke="#999"/><rect x="11" y="12" width="5" height="5" fill="#40b0f0"/></svg>
<div class="t " style="left:213px;top:390px;font-size:19px;color:#101010;line-height:24px;"><span class="c">倒</span><span class="c">转</span>(<u>I</u>)</div>
<svg style="left:171px;top:388px" width="28" height="28" viewBox="0 0 28 28"><path d="M19 22V12C19 6 9 6 9 12V15" stroke="#1a6cff" stroke-width="3" fill="none"/><path d="M4 14L9 21L14 14Z" fill="#1a6cff"/></svg>
<div class="t " style="left:213px;top:424px;font-size:19px;color:#101010;line-height:24px;"><span class="c">机</span><span class="c">械</span><span class="c">化</span>(<u>Z</u>)...</div>
<svg style="left:171px;top:422px" width="28" height="28" viewBox="0 0 28 28"><rect x="7" y="7" width="14" height="14" fill="#0a2aff"/><path d="M14 2L17 11L26 14L17 17L14 26L11 17L2 14L11 11Z" fill="#1a44ff"/><circle cx="14" cy="14" r="3.5" fill="#48b8ff"/></svg>
<div class="t " style="left:213px;top:459px;font-size:19px;color:#101010;line-height:24px;"><span class="c">多</span><span class="c">声</span><span class="c">道</span><span class="c">混</span><span class="c">音</span><span class="c">器</span>(<u>N</u>)...</div>
<svg style="left:171px;top:457px" width="28" height="28" viewBox="0 0 28 28"><path d="M11.1 16.8L3.6 9.1L10.1 3.2Z" fill="#ffffff" stroke="#d0d0d0" stroke-width="0.8"/><path d="M10.0 13.9L10.1 3.2L18.9 3.6Z" fill="#ee1a1a"/><path d="M11.2 11.1L18.9 3.6L24.8 10.1Z" fill="#30c030"/><path d="M14.1 10.0L24.8 10.1L24.4 18.9Z" fill="#3a9af0"/><path d="M16.9 11.2L24.4 18.9L17.9 24.8Z" fill="#f0d890"/><path d="M18.0 14.1L17.9 24.8L9.1 24.4Z" fill="#9a5a20"/><path d="M16.8 16.9L9.1 24.4L3.2 17.9Z" fill="#8a8a8a"/><path d="M13.9 18.0L3.2 17.9L3.6 9.1Z" fill="#7a5ac8"/><path d="M14 8L19 14L14 20L9 14Z" fill="#5ab8ff"/></svg>
<div class="t " style="left:213px;top:493px;font-size:19px;color:#101010;line-height:24px;"><span class="c">偏</span><span class="c">移</span>(<u>O</u>)...</div>
<svg style="left:171px;top:491px" width="28" height="28" viewBox="0 0 28 28"><rect x="3" y="13" width="22" height="2.5" fill="#1a3aff"/><path d="M14 2L20 9H8Z" fill="#1a6cff"/><path d="M14 26L20 19H8Z" fill="#1a6cff"/><rect x="12" y="7" width="4" height="4" fill="#1a6cff"/><rect x="12" y="17" width="4" height="4" fill="#1a6cff"/></svg>
<div class="t " style="left:213px;top:527px;font-size:19px;color:#101010;line-height:24px;"><span class="c">音</span><span class="c">高</span>(<u>P</u>)...</div>
<svg style="left:171px;top:525px" width="28" height="28" viewBox="0 0 28 28"><g fill="#6a7480"><rect x="3" y="3" width="2" height="22"/><rect x="3" y="4" width="22" height="1.2"/><rect x="3" y="9" width="22" height="1.2"/><rect x="3" y="14" width="22" height="1.2"/><rect x="3" y="19" width="22" height="1.2"/><rect x="3" y="24" width="22" height="1.2"/></g>
<ellipse cx="11" cy="19" rx="4" ry="3.5" fill="#1a5aff"/><rect x="14" y="4" width="2" height="15" fill="#1a5aff"/><path d="M16 4L21 9L20 10L16 7Z" fill="#1a5aff"/></svg>
<div class="t " style="left:213px;top:561px;font-size:19px;color:#a8a8a8;line-height:24px;"><span class="c">插</span><span class="c">件</span>(<u>Q</u>)</div>
<svg style="left:171px;top:559px" width="28" height="28" viewBox="0 0 28 28"><rect x="9" y="3" width="3" height="7" fill="#c8c8c8"/><rect x="16" y="3" width="3" height="7" fill="#c8c8c8"/><path d="M4 10H24V14C24 19 19 21 16 21V25H12V21C9 21 4 19 4 14Z" fill="#c8c8c8"/></svg>
<div class="t " style="left:213px;top:595px;font-size:19px;color:#101010;line-height:24px;"><span class="c">混</span><span class="c">响</span>(<u>V</u>)...</div>
<svg style="left:171px;top:593px" width="28" height="28" viewBox="0 0 28 28"><path d="M5 12.5H20V9L27 14L20 19V15.5H5Z" fill="#0a10e0"/><path d="M9.5 11C9.5 7.5 12 5.5 16 5" stroke="#48b8ff" stroke-width="2.6" fill="none"/><path d="M9.5 17C9.5 20.5 12 22.5 16 23" stroke="#48b8ff" stroke-width="2.6" fill="none"/><path d="M15 1.5L22 5L16 9Z" fill="#1a6cff"/><path d="M15 26.5L22 23L16 19Z" fill="#1a6cff"/></svg>
<div class="t " style="left:213px;top:629px;font-size:19px;color:#101010;line-height:24px;"><span class="c">反</span><span class="c">向</span>(<u>R</u>)</div>
<svg style="left:171px;top:627px" width="28" height="28" viewBox="0 0 28 28"><path d="M3 14L12 6V11H25L22 14L25 17H12V22Z" fill="#1a6cff"/></svg>
<div class="t " style="left:213px;top:663px;font-size:19px;color:#101010;line-height:24px;"><span class="c">立</span><span class="c">体</span><span class="c">声</span>(<u>S</u>)</div>
<svg style="left:434px;top:669px" width="8" height="12"><polygon points="1,1 7,6 1,11" fill="#101010"/></svg>
<div class="t " style="left:213px;top:697px;font-size:19px;color:#101010;line-height:24px;"><span class="c">时</span><span class="c">间</span>(<u>T</u>)...</div>
<svg style="left:171px;top:695px" width="28" height="28" viewBox="0 0 28 28"><circle cx="14" cy="14" r="11" fill="#f4f4f4" stroke="#777" stroke-width="2"/><path d="M14 5V15L9 20" stroke="#1a2aa0" stroke-width="2" fill="none"/></svg>
<div class="t " style="left:213px;top:731px;font-size:19px;color:#101010;line-height:24px;"><span class="c">旁</span><span class="c">白</span>(<u>W</u>)...</div>
<svg style="left:171px;top:729px" width="28" height="28" viewBox="0 0 28 28"><path d="M3 14V25H25V14L22 14L14 21L6 14Z" fill="#0a30e0"/><rect x="10" y="3" width="15" height="11" rx="3" fill="#d0d0d0" stroke="#3a8aff" stroke-width="1.5"/><path d="M13 14L11 19L17 14Z" fill="#d0d0d0"/></svg>
<div class="t " style="left:213px;top:765px;font-size:19px;color:#101010;line-height:24px;"><span class="c">音</span><span class="c">量</span>(<u>U</u>)</div>
<svg style="left:434px;top:771px" width="8" height="12"><polygon points="1,1 7,6 1,11" fill="#101010"/></svg>
<div style="left:205px;top:799px;width:245px;height:2px;background:#a8a8a8;"></div>
<div class="t " style="left:213px;top:809px;font-size:19px;color:#101010;line-height:24px;"><span class="c">回</span><span class="c">放</span><span class="c">速</span><span class="c">率</span>(<u>X</u>)...</div>
<div class="t " style="left:213px;top:843px;font-size:19px;color:#101010;line-height:24px;"><span class="c">重</span><span class="c">新</span><span class="c">采</span><span class="c">样</span>(<u>M</u>)...</div>
<svg style="left:171px;top:807px" width="28" height="28" viewBox="0 0 28 28"><text x="7" y="13" font-size="13" font-family="Liberation Sans" fill="#505050">Hz</text><path d="M8 16L20 20L8 24Z" fill="#00d000"/></svg>
<svg style="left:171px;top:841px" width="28" height="28" viewBox="0 0 28 28"><text x="7" y="13" font-size="13" font-family="Liberation Sans" fill="#505050">Hz</text><path d="M3 21H25" stroke="#999" stroke-width="1"/><circle cx="5" cy="21" r="2" fill="#fff" stroke="#888"/><circle cx="14" cy="21" r="2" fill="#fff" stroke="#888"/><circle cx="23" cy="21" r="2" fill="#fff" stroke="#888"/></svg>
</body></html>
